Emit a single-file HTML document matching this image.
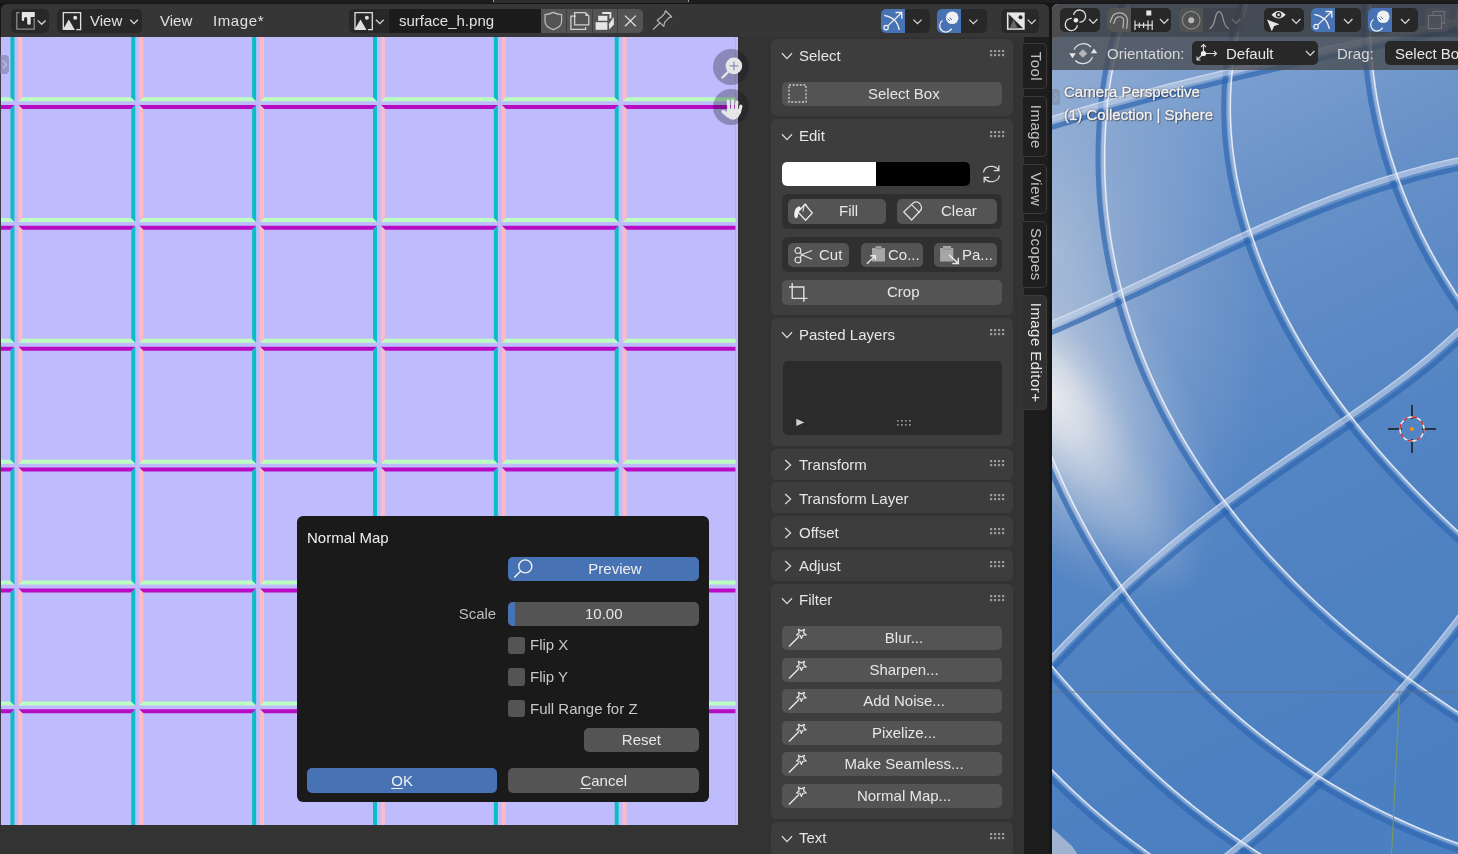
<!DOCTYPE html>
<html><head><meta charset="utf-8">
<style>
*{box-sizing:border-box;margin:0;padding:0}
*{-webkit-font-smoothing:antialiased}
html,body{width:1458px;height:854px;overflow:hidden;background:#161616;font-family:"Liberation Sans",sans-serif;font-size:15px;color:#e6e6e6}
.a{position:absolute}
.t{will-change:transform;position:absolute;white-space:nowrap;line-height:1;font-size:15px}
.pn{position:absolute;left:771px;width:242px;background:#3d3d3d;border-radius:6px}
.btn{position:absolute;background:#545454;border-radius:5px}
.dbtn{position:absolute;background:#282828;border-radius:5px}
</style></head><body>

<!-- LEFT AREA -->
<div class="a" style="left:0;top:0;width:1458px;height:3px;background:#1d1d1d"></div>
<div class="a" style="left:0.5px;top:4.4px;width:1048.5px;height:850px;background:#363636;border-radius:6px 6px 0 0"></div>
<!-- canvas surround bottom -->
<div class="a" style="left:0;top:825px;width:738px;height:29px;background:#333"></div>
<!-- canvas -->
<svg class="a" style="left:0px;top:37px" width="738" height="788" viewBox="0 37 738 788">
<rect x="0" y="37" width="738" height="788" fill="#bfbcfd"/>
<polygon points="-102.55,-15.85 14.45,-15.85 10.45,-11.85 -98.55,-11.85" fill="#b80bc4"/>
<polygon points="-102.55,101.15 14.45,101.15 10.45,97.15 -98.55,97.15" fill="#bbffc1"/>
<polygon points="-102.55,-15.85 -98.55,-11.85 -98.55,97.15 -102.55,101.15" fill="#ffbbc1"/>
<polygon points="14.45,-15.85 14.45,101.15 10.45,97.15 10.45,-11.85" fill="#0abdc6"/>
<polygon points="-102.55,105.00 14.45,105.00 10.45,109.00 -98.55,109.00" fill="#b80bc4"/>
<polygon points="-102.55,222.00 14.45,222.00 10.45,218.00 -98.55,218.00" fill="#bbffc1"/>
<polygon points="-102.55,105.00 -98.55,109.00 -98.55,218.00 -102.55,222.00" fill="#ffbbc1"/>
<polygon points="14.45,105.00 14.45,222.00 10.45,218.00 10.45,109.00" fill="#0abdc6"/>
<polygon points="-102.55,225.85 14.45,225.85 10.45,229.85 -98.55,229.85" fill="#b80bc4"/>
<polygon points="-102.55,342.85 14.45,342.85 10.45,338.85 -98.55,338.85" fill="#bbffc1"/>
<polygon points="-102.55,225.85 -98.55,229.85 -98.55,338.85 -102.55,342.85" fill="#ffbbc1"/>
<polygon points="14.45,225.85 14.45,342.85 10.45,338.85 10.45,229.85" fill="#0abdc6"/>
<polygon points="-102.55,346.70 14.45,346.70 10.45,350.70 -98.55,350.70" fill="#b80bc4"/>
<polygon points="-102.55,463.70 14.45,463.70 10.45,459.70 -98.55,459.70" fill="#bbffc1"/>
<polygon points="-102.55,346.70 -98.55,350.70 -98.55,459.70 -102.55,463.70" fill="#ffbbc1"/>
<polygon points="14.45,346.70 14.45,463.70 10.45,459.70 10.45,350.70" fill="#0abdc6"/>
<polygon points="-102.55,467.55 14.45,467.55 10.45,471.55 -98.55,471.55" fill="#b80bc4"/>
<polygon points="-102.55,584.55 14.45,584.55 10.45,580.55 -98.55,580.55" fill="#bbffc1"/>
<polygon points="-102.55,467.55 -98.55,471.55 -98.55,580.55 -102.55,584.55" fill="#ffbbc1"/>
<polygon points="14.45,467.55 14.45,584.55 10.45,580.55 10.45,471.55" fill="#0abdc6"/>
<polygon points="-102.55,588.40 14.45,588.40 10.45,592.40 -98.55,592.40" fill="#b80bc4"/>
<polygon points="-102.55,705.40 14.45,705.40 10.45,701.40 -98.55,701.40" fill="#bbffc1"/>
<polygon points="-102.55,588.40 -98.55,592.40 -98.55,701.40 -102.55,705.40" fill="#ffbbc1"/>
<polygon points="14.45,588.40 14.45,705.40 10.45,701.40 10.45,592.40" fill="#0abdc6"/>
<polygon points="-102.55,709.25 14.45,709.25 10.45,713.25 -98.55,713.25" fill="#b80bc4"/>
<polygon points="-102.55,709.25 -98.55,713.25 -98.55,826.25 -102.55,826.25" fill="#ffbbc1"/>
<polygon points="14.45,709.25 14.45,826.25 10.45,826.25 10.45,713.25" fill="#0abdc6"/>
<polygon points="18.30,-15.85 135.30,-15.85 131.30,-11.85 22.30,-11.85" fill="#b80bc4"/>
<polygon points="18.30,101.15 135.30,101.15 131.30,97.15 22.30,97.15" fill="#bbffc1"/>
<polygon points="18.30,-15.85 22.30,-11.85 22.30,97.15 18.30,101.15" fill="#ffbbc1"/>
<polygon points="135.30,-15.85 135.30,101.15 131.30,97.15 131.30,-11.85" fill="#0abdc6"/>
<polygon points="18.30,105.00 135.30,105.00 131.30,109.00 22.30,109.00" fill="#b80bc4"/>
<polygon points="18.30,222.00 135.30,222.00 131.30,218.00 22.30,218.00" fill="#bbffc1"/>
<polygon points="18.30,105.00 22.30,109.00 22.30,218.00 18.30,222.00" fill="#ffbbc1"/>
<polygon points="135.30,105.00 135.30,222.00 131.30,218.00 131.30,109.00" fill="#0abdc6"/>
<polygon points="18.30,225.85 135.30,225.85 131.30,229.85 22.30,229.85" fill="#b80bc4"/>
<polygon points="18.30,342.85 135.30,342.85 131.30,338.85 22.30,338.85" fill="#bbffc1"/>
<polygon points="18.30,225.85 22.30,229.85 22.30,338.85 18.30,342.85" fill="#ffbbc1"/>
<polygon points="135.30,225.85 135.30,342.85 131.30,338.85 131.30,229.85" fill="#0abdc6"/>
<polygon points="18.30,346.70 135.30,346.70 131.30,350.70 22.30,350.70" fill="#b80bc4"/>
<polygon points="18.30,463.70 135.30,463.70 131.30,459.70 22.30,459.70" fill="#bbffc1"/>
<polygon points="18.30,346.70 22.30,350.70 22.30,459.70 18.30,463.70" fill="#ffbbc1"/>
<polygon points="135.30,346.70 135.30,463.70 131.30,459.70 131.30,350.70" fill="#0abdc6"/>
<polygon points="18.30,467.55 135.30,467.55 131.30,471.55 22.30,471.55" fill="#b80bc4"/>
<polygon points="18.30,584.55 135.30,584.55 131.30,580.55 22.30,580.55" fill="#bbffc1"/>
<polygon points="18.30,467.55 22.30,471.55 22.30,580.55 18.30,584.55" fill="#ffbbc1"/>
<polygon points="135.30,467.55 135.30,584.55 131.30,580.55 131.30,471.55" fill="#0abdc6"/>
<polygon points="18.30,588.40 135.30,588.40 131.30,592.40 22.30,592.40" fill="#b80bc4"/>
<polygon points="18.30,705.40 135.30,705.40 131.30,701.40 22.30,701.40" fill="#bbffc1"/>
<polygon points="18.30,588.40 22.30,592.40 22.30,701.40 18.30,705.40" fill="#ffbbc1"/>
<polygon points="135.30,588.40 135.30,705.40 131.30,701.40 131.30,592.40" fill="#0abdc6"/>
<polygon points="18.30,709.25 135.30,709.25 131.30,713.25 22.30,713.25" fill="#b80bc4"/>
<polygon points="18.30,709.25 22.30,713.25 22.30,826.25 18.30,826.25" fill="#ffbbc1"/>
<polygon points="135.30,709.25 135.30,826.25 131.30,826.25 131.30,713.25" fill="#0abdc6"/>
<polygon points="139.15,-15.85 256.15,-15.85 252.15,-11.85 143.15,-11.85" fill="#b80bc4"/>
<polygon points="139.15,101.15 256.15,101.15 252.15,97.15 143.15,97.15" fill="#bbffc1"/>
<polygon points="139.15,-15.85 143.15,-11.85 143.15,97.15 139.15,101.15" fill="#ffbbc1"/>
<polygon points="256.15,-15.85 256.15,101.15 252.15,97.15 252.15,-11.85" fill="#0abdc6"/>
<polygon points="139.15,105.00 256.15,105.00 252.15,109.00 143.15,109.00" fill="#b80bc4"/>
<polygon points="139.15,222.00 256.15,222.00 252.15,218.00 143.15,218.00" fill="#bbffc1"/>
<polygon points="139.15,105.00 143.15,109.00 143.15,218.00 139.15,222.00" fill="#ffbbc1"/>
<polygon points="256.15,105.00 256.15,222.00 252.15,218.00 252.15,109.00" fill="#0abdc6"/>
<polygon points="139.15,225.85 256.15,225.85 252.15,229.85 143.15,229.85" fill="#b80bc4"/>
<polygon points="139.15,342.85 256.15,342.85 252.15,338.85 143.15,338.85" fill="#bbffc1"/>
<polygon points="139.15,225.85 143.15,229.85 143.15,338.85 139.15,342.85" fill="#ffbbc1"/>
<polygon points="256.15,225.85 256.15,342.85 252.15,338.85 252.15,229.85" fill="#0abdc6"/>
<polygon points="139.15,346.70 256.15,346.70 252.15,350.70 143.15,350.70" fill="#b80bc4"/>
<polygon points="139.15,463.70 256.15,463.70 252.15,459.70 143.15,459.70" fill="#bbffc1"/>
<polygon points="139.15,346.70 143.15,350.70 143.15,459.70 139.15,463.70" fill="#ffbbc1"/>
<polygon points="256.15,346.70 256.15,463.70 252.15,459.70 252.15,350.70" fill="#0abdc6"/>
<polygon points="139.15,467.55 256.15,467.55 252.15,471.55 143.15,471.55" fill="#b80bc4"/>
<polygon points="139.15,584.55 256.15,584.55 252.15,580.55 143.15,580.55" fill="#bbffc1"/>
<polygon points="139.15,467.55 143.15,471.55 143.15,580.55 139.15,584.55" fill="#ffbbc1"/>
<polygon points="256.15,467.55 256.15,584.55 252.15,580.55 252.15,471.55" fill="#0abdc6"/>
<polygon points="139.15,588.40 256.15,588.40 252.15,592.40 143.15,592.40" fill="#b80bc4"/>
<polygon points="139.15,705.40 256.15,705.40 252.15,701.40 143.15,701.40" fill="#bbffc1"/>
<polygon points="139.15,588.40 143.15,592.40 143.15,701.40 139.15,705.40" fill="#ffbbc1"/>
<polygon points="256.15,588.40 256.15,705.40 252.15,701.40 252.15,592.40" fill="#0abdc6"/>
<polygon points="139.15,709.25 256.15,709.25 252.15,713.25 143.15,713.25" fill="#b80bc4"/>
<polygon points="139.15,709.25 143.15,713.25 143.15,826.25 139.15,826.25" fill="#ffbbc1"/>
<polygon points="256.15,709.25 256.15,826.25 252.15,826.25 252.15,713.25" fill="#0abdc6"/>
<polygon points="260.00,-15.85 377.00,-15.85 373.00,-11.85 264.00,-11.85" fill="#b80bc4"/>
<polygon points="260.00,101.15 377.00,101.15 373.00,97.15 264.00,97.15" fill="#bbffc1"/>
<polygon points="260.00,-15.85 264.00,-11.85 264.00,97.15 260.00,101.15" fill="#ffbbc1"/>
<polygon points="377.00,-15.85 377.00,101.15 373.00,97.15 373.00,-11.85" fill="#0abdc6"/>
<polygon points="260.00,105.00 377.00,105.00 373.00,109.00 264.00,109.00" fill="#b80bc4"/>
<polygon points="260.00,222.00 377.00,222.00 373.00,218.00 264.00,218.00" fill="#bbffc1"/>
<polygon points="260.00,105.00 264.00,109.00 264.00,218.00 260.00,222.00" fill="#ffbbc1"/>
<polygon points="377.00,105.00 377.00,222.00 373.00,218.00 373.00,109.00" fill="#0abdc6"/>
<polygon points="260.00,225.85 377.00,225.85 373.00,229.85 264.00,229.85" fill="#b80bc4"/>
<polygon points="260.00,342.85 377.00,342.85 373.00,338.85 264.00,338.85" fill="#bbffc1"/>
<polygon points="260.00,225.85 264.00,229.85 264.00,338.85 260.00,342.85" fill="#ffbbc1"/>
<polygon points="377.00,225.85 377.00,342.85 373.00,338.85 373.00,229.85" fill="#0abdc6"/>
<polygon points="260.00,346.70 377.00,346.70 373.00,350.70 264.00,350.70" fill="#b80bc4"/>
<polygon points="260.00,463.70 377.00,463.70 373.00,459.70 264.00,459.70" fill="#bbffc1"/>
<polygon points="260.00,346.70 264.00,350.70 264.00,459.70 260.00,463.70" fill="#ffbbc1"/>
<polygon points="377.00,346.70 377.00,463.70 373.00,459.70 373.00,350.70" fill="#0abdc6"/>
<polygon points="260.00,467.55 377.00,467.55 373.00,471.55 264.00,471.55" fill="#b80bc4"/>
<polygon points="260.00,584.55 377.00,584.55 373.00,580.55 264.00,580.55" fill="#bbffc1"/>
<polygon points="260.00,467.55 264.00,471.55 264.00,580.55 260.00,584.55" fill="#ffbbc1"/>
<polygon points="377.00,467.55 377.00,584.55 373.00,580.55 373.00,471.55" fill="#0abdc6"/>
<polygon points="260.00,588.40 377.00,588.40 373.00,592.40 264.00,592.40" fill="#b80bc4"/>
<polygon points="260.00,705.40 377.00,705.40 373.00,701.40 264.00,701.40" fill="#bbffc1"/>
<polygon points="260.00,588.40 264.00,592.40 264.00,701.40 260.00,705.40" fill="#ffbbc1"/>
<polygon points="377.00,588.40 377.00,705.40 373.00,701.40 373.00,592.40" fill="#0abdc6"/>
<polygon points="260.00,709.25 377.00,709.25 373.00,713.25 264.00,713.25" fill="#b80bc4"/>
<polygon points="260.00,709.25 264.00,713.25 264.00,826.25 260.00,826.25" fill="#ffbbc1"/>
<polygon points="377.00,709.25 377.00,826.25 373.00,826.25 373.00,713.25" fill="#0abdc6"/>
<polygon points="380.85,-15.85 497.85,-15.85 493.85,-11.85 384.85,-11.85" fill="#b80bc4"/>
<polygon points="380.85,101.15 497.85,101.15 493.85,97.15 384.85,97.15" fill="#bbffc1"/>
<polygon points="380.85,-15.85 384.85,-11.85 384.85,97.15 380.85,101.15" fill="#ffbbc1"/>
<polygon points="497.85,-15.85 497.85,101.15 493.85,97.15 493.85,-11.85" fill="#0abdc6"/>
<polygon points="380.85,105.00 497.85,105.00 493.85,109.00 384.85,109.00" fill="#b80bc4"/>
<polygon points="380.85,222.00 497.85,222.00 493.85,218.00 384.85,218.00" fill="#bbffc1"/>
<polygon points="380.85,105.00 384.85,109.00 384.85,218.00 380.85,222.00" fill="#ffbbc1"/>
<polygon points="497.85,105.00 497.85,222.00 493.85,218.00 493.85,109.00" fill="#0abdc6"/>
<polygon points="380.85,225.85 497.85,225.85 493.85,229.85 384.85,229.85" fill="#b80bc4"/>
<polygon points="380.85,342.85 497.85,342.85 493.85,338.85 384.85,338.85" fill="#bbffc1"/>
<polygon points="380.85,225.85 384.85,229.85 384.85,338.85 380.85,342.85" fill="#ffbbc1"/>
<polygon points="497.85,225.85 497.85,342.85 493.85,338.85 493.85,229.85" fill="#0abdc6"/>
<polygon points="380.85,346.70 497.85,346.70 493.85,350.70 384.85,350.70" fill="#b80bc4"/>
<polygon points="380.85,463.70 497.85,463.70 493.85,459.70 384.85,459.70" fill="#bbffc1"/>
<polygon points="380.85,346.70 384.85,350.70 384.85,459.70 380.85,463.70" fill="#ffbbc1"/>
<polygon points="497.85,346.70 497.85,463.70 493.85,459.70 493.85,350.70" fill="#0abdc6"/>
<polygon points="380.85,467.55 497.85,467.55 493.85,471.55 384.85,471.55" fill="#b80bc4"/>
<polygon points="380.85,584.55 497.85,584.55 493.85,580.55 384.85,580.55" fill="#bbffc1"/>
<polygon points="380.85,467.55 384.85,471.55 384.85,580.55 380.85,584.55" fill="#ffbbc1"/>
<polygon points="497.85,467.55 497.85,584.55 493.85,580.55 493.85,471.55" fill="#0abdc6"/>
<polygon points="380.85,588.40 497.85,588.40 493.85,592.40 384.85,592.40" fill="#b80bc4"/>
<polygon points="380.85,705.40 497.85,705.40 493.85,701.40 384.85,701.40" fill="#bbffc1"/>
<polygon points="380.85,588.40 384.85,592.40 384.85,701.40 380.85,705.40" fill="#ffbbc1"/>
<polygon points="497.85,588.40 497.85,705.40 493.85,701.40 493.85,592.40" fill="#0abdc6"/>
<polygon points="380.85,709.25 497.85,709.25 493.85,713.25 384.85,713.25" fill="#b80bc4"/>
<polygon points="380.85,709.25 384.85,713.25 384.85,826.25 380.85,826.25" fill="#ffbbc1"/>
<polygon points="497.85,709.25 497.85,826.25 493.85,826.25 493.85,713.25" fill="#0abdc6"/>
<polygon points="501.70,-15.85 618.70,-15.85 614.70,-11.85 505.70,-11.85" fill="#b80bc4"/>
<polygon points="501.70,101.15 618.70,101.15 614.70,97.15 505.70,97.15" fill="#bbffc1"/>
<polygon points="501.70,-15.85 505.70,-11.85 505.70,97.15 501.70,101.15" fill="#ffbbc1"/>
<polygon points="618.70,-15.85 618.70,101.15 614.70,97.15 614.70,-11.85" fill="#0abdc6"/>
<polygon points="501.70,105.00 618.70,105.00 614.70,109.00 505.70,109.00" fill="#b80bc4"/>
<polygon points="501.70,222.00 618.70,222.00 614.70,218.00 505.70,218.00" fill="#bbffc1"/>
<polygon points="501.70,105.00 505.70,109.00 505.70,218.00 501.70,222.00" fill="#ffbbc1"/>
<polygon points="618.70,105.00 618.70,222.00 614.70,218.00 614.70,109.00" fill="#0abdc6"/>
<polygon points="501.70,225.85 618.70,225.85 614.70,229.85 505.70,229.85" fill="#b80bc4"/>
<polygon points="501.70,342.85 618.70,342.85 614.70,338.85 505.70,338.85" fill="#bbffc1"/>
<polygon points="501.70,225.85 505.70,229.85 505.70,338.85 501.70,342.85" fill="#ffbbc1"/>
<polygon points="618.70,225.85 618.70,342.85 614.70,338.85 614.70,229.85" fill="#0abdc6"/>
<polygon points="501.70,346.70 618.70,346.70 614.70,350.70 505.70,350.70" fill="#b80bc4"/>
<polygon points="501.70,463.70 618.70,463.70 614.70,459.70 505.70,459.70" fill="#bbffc1"/>
<polygon points="501.70,346.70 505.70,350.70 505.70,459.70 501.70,463.70" fill="#ffbbc1"/>
<polygon points="618.70,346.70 618.70,463.70 614.70,459.70 614.70,350.70" fill="#0abdc6"/>
<polygon points="501.70,467.55 618.70,467.55 614.70,471.55 505.70,471.55" fill="#b80bc4"/>
<polygon points="501.70,584.55 618.70,584.55 614.70,580.55 505.70,580.55" fill="#bbffc1"/>
<polygon points="501.70,467.55 505.70,471.55 505.70,580.55 501.70,584.55" fill="#ffbbc1"/>
<polygon points="618.70,467.55 618.70,584.55 614.70,580.55 614.70,471.55" fill="#0abdc6"/>
<polygon points="501.70,588.40 618.70,588.40 614.70,592.40 505.70,592.40" fill="#b80bc4"/>
<polygon points="501.70,705.40 618.70,705.40 614.70,701.40 505.70,701.40" fill="#bbffc1"/>
<polygon points="501.70,588.40 505.70,592.40 505.70,701.40 501.70,705.40" fill="#ffbbc1"/>
<polygon points="618.70,588.40 618.70,705.40 614.70,701.40 614.70,592.40" fill="#0abdc6"/>
<polygon points="501.70,709.25 618.70,709.25 614.70,713.25 505.70,713.25" fill="#b80bc4"/>
<polygon points="501.70,709.25 505.70,713.25 505.70,826.25 501.70,826.25" fill="#ffbbc1"/>
<polygon points="618.70,709.25 618.70,826.25 614.70,826.25 614.70,713.25" fill="#0abdc6"/>
<polygon points="622.55,-15.85 739.55,-15.85 735.55,-11.85 626.55,-11.85" fill="#b80bc4"/>
<polygon points="622.55,101.15 739.55,101.15 735.55,97.15 626.55,97.15" fill="#bbffc1"/>
<polygon points="622.55,-15.85 626.55,-11.85 626.55,97.15 622.55,101.15" fill="#ffbbc1"/>
<polygon points="739.55,-15.85 739.55,101.15 735.55,97.15 735.55,-11.85" fill="#0abdc6"/>
<polygon points="622.55,105.00 739.55,105.00 735.55,109.00 626.55,109.00" fill="#b80bc4"/>
<polygon points="622.55,222.00 739.55,222.00 735.55,218.00 626.55,218.00" fill="#bbffc1"/>
<polygon points="622.55,105.00 626.55,109.00 626.55,218.00 622.55,222.00" fill="#ffbbc1"/>
<polygon points="739.55,105.00 739.55,222.00 735.55,218.00 735.55,109.00" fill="#0abdc6"/>
<polygon points="622.55,225.85 739.55,225.85 735.55,229.85 626.55,229.85" fill="#b80bc4"/>
<polygon points="622.55,342.85 739.55,342.85 735.55,338.85 626.55,338.85" fill="#bbffc1"/>
<polygon points="622.55,225.85 626.55,229.85 626.55,338.85 622.55,342.85" fill="#ffbbc1"/>
<polygon points="739.55,225.85 739.55,342.85 735.55,338.85 735.55,229.85" fill="#0abdc6"/>
<polygon points="622.55,346.70 739.55,346.70 735.55,350.70 626.55,350.70" fill="#b80bc4"/>
<polygon points="622.55,463.70 739.55,463.70 735.55,459.70 626.55,459.70" fill="#bbffc1"/>
<polygon points="622.55,346.70 626.55,350.70 626.55,459.70 622.55,463.70" fill="#ffbbc1"/>
<polygon points="739.55,346.70 739.55,463.70 735.55,459.70 735.55,350.70" fill="#0abdc6"/>
<polygon points="622.55,467.55 739.55,467.55 735.55,471.55 626.55,471.55" fill="#b80bc4"/>
<polygon points="622.55,584.55 739.55,584.55 735.55,580.55 626.55,580.55" fill="#bbffc1"/>
<polygon points="622.55,467.55 626.55,471.55 626.55,580.55 622.55,584.55" fill="#ffbbc1"/>
<polygon points="739.55,467.55 739.55,584.55 735.55,580.55 735.55,471.55" fill="#0abdc6"/>
<polygon points="622.55,588.40 739.55,588.40 735.55,592.40 626.55,592.40" fill="#b80bc4"/>
<polygon points="622.55,705.40 739.55,705.40 735.55,701.40 626.55,701.40" fill="#bbffc1"/>
<polygon points="622.55,588.40 626.55,592.40 626.55,701.40 622.55,705.40" fill="#ffbbc1"/>
<polygon points="739.55,588.40 739.55,705.40 735.55,701.40 735.55,592.40" fill="#0abdc6"/>
<polygon points="622.55,709.25 739.55,709.25 735.55,713.25 626.55,713.25" fill="#b80bc4"/>
<polygon points="622.55,709.25 626.55,713.25 626.55,826.25 622.55,826.25" fill="#ffbbc1"/>
<polygon points="739.55,709.25 739.55,826.25 735.55,826.25 735.55,713.25" fill="#0abdc6"/>
<rect x="735.5" y="37" width="2.5" height="788" fill="#bfbcfd"/>
<rect x="0" y="37" width="1" height="788" fill="#3c3c4a"/>
</svg>
<!-- N panel region -->
<div class="a" style="left:738px;top:37px;width:286px;height:817px;background:#333"></div>
<!-- tab strip -->
<div class="a" style="left:1024px;top:37px;width:25px;height:817px;background:#1d1d1d"></div>



<!-- POPUP -->
<div class="a" style="left:297px;top:516px;width:412px;height:286.3px;background:#1a1a1a;border-radius:6px"></div>
<div class="t" style="left:307px;top:529.5px;color:#f0f0f0">Normal Map</div>
<div class="btn" style="left:507.8px;top:556.7px;width:191.5px;height:24.6px;background:#4772b3"></div>
<svg class="a" style="left:512px;top:558px" width="24" height="22" viewBox="0 0 24 22"><circle cx="13.3" cy="8.4" r="6.5" fill="none" stroke="#f0f0f0" stroke-width="1.4"/><path d="M8.7 13L2.3 19.6" stroke="#f0f0f0" stroke-width="1.5"/></svg>
<div class="t" style="left:507.8px;top:556.7px;width:214px;height:24.6px;line-height:24.6px;text-align:center;color:#f0f0f0">Preview</div>
<div class="t" style="left:300px;top:602px;width:196.2px;height:23.9px;line-height:23.9px;text-align:right;color:#bdbdbd">Scale</div>
<div class="btn" style="left:507.8px;top:602px;width:191.5px;height:23.9px;background:#545454;overflow:hidden"><div class="a" style="left:0;top:0;width:7px;height:24px;background:#4772b3"></div></div>
<div class="t" style="left:507.8px;top:602px;width:191.5px;height:23.9px;line-height:23.9px;text-align:center;color:#e6e6e6">10.00</div>
<div class="btn" style="left:507.8px;top:637.2px;width:17.6px;height:16.8px;background:#545454;border-radius:3px"></div>
<div class="t" style="left:530px;top:637.2px;height:16.8px;line-height:16.8px;color:#c8c8c8">Flip X</div>
<div class="btn" style="left:507.8px;top:668.1px;width:17.6px;height:17.6px;background:#545454;border-radius:3px"></div>
<div class="t" style="left:530px;top:668.1px;height:17.6px;line-height:17.6px;color:#c8c8c8">Flip Y</div>
<div class="btn" style="left:507.8px;top:699.7px;width:17.6px;height:17.6px;background:#545454;border-radius:3px"></div>
<div class="t" style="left:530px;top:699.7px;height:17.6px;line-height:17.6px;color:#c8c8c8">Full Range for Z</div>
<div class="btn" style="left:584.4px;top:727.8px;width:114.9px;height:24.6px;background:#545454"></div>
<div class="t" style="left:584.4px;top:727.8px;width:114.9px;height:24.6px;line-height:24.6px;text-align:center;color:#e6e6e6">Reset</div>
<div class="btn" style="left:306.5px;top:768.2px;width:190.1px;height:24.6px;background:#4772b3"></div>
<div class="t" style="left:306.5px;top:769px;width:190.1px;height:24.6px;line-height:24.6px;text-align:center;color:#f0f0f0"><u style="text-decoration-thickness:1px;text-underline-offset:1.5px">O</u>K</div>
<div class="btn" style="left:507.8px;top:768.2px;width:191.5px;height:24.6px;background:#545454"></div>
<div class="t" style="left:507.8px;top:769px;width:191.5px;height:24.6px;line-height:24.6px;text-align:center;color:#e6e6e6"><u style="text-decoration-thickness:1px;text-underline-offset:1.5px">C</u>ancel</div>

<div class="a" style="left:493px;top:0;width:196px;height:2.5px;background:#2e2e2e"></div><div class="a" style="left:493px;top:0;width:1.2px;height:2.2px;background:#9a9a9a"></div><div class="a" style="left:688px;top:0;width:1.2px;height:2.2px;background:#9a9a9a"></div>
<!-- NPANEL -->
<div class="pn" style="top:39px;height:77px"></div><div class="t" style="left:799px;top:47.5px;color:#e6e6e6">Select</div><svg class="a" style="left:780.6px;top:52.2px" width="13" height="9" viewBox="0 0 13 9"><polyline points="1,1.2 6,6.6 11,1.2" fill="none" stroke="#d8d8d8" stroke-width="1.3"/></svg><svg class="a" style="left:990px;top:50.3px" width="15" height="7" viewBox="0 0 15 7"><rect x="0" y="0" width="2.2" height="2.2" fill="#9a9a9a"/><rect x="0" y="4" width="2.2" height="2.2" fill="#9a9a9a"/><rect x="4" y="0" width="2.2" height="2.2" fill="#9a9a9a"/><rect x="4" y="4" width="2.2" height="2.2" fill="#9a9a9a"/><rect x="8" y="0" width="2.2" height="2.2" fill="#9a9a9a"/><rect x="8" y="4" width="2.2" height="2.2" fill="#9a9a9a"/><rect x="12" y="0" width="2.2" height="2.2" fill="#9a9a9a"/><rect x="12" y="4" width="2.2" height="2.2" fill="#9a9a9a"/></svg><div class="btn" style="left:782.2px;top:81.6px;width:219.7px;height:24px;background:#545454;border-radius:5px"></div><div class="t" style="left:868.2px;top:81.6px;height:24px;line-height:24px;color:#e6e6e6">Select Box</div><svg class="a" style="left:788px;top:84px" width="20" height="19" viewBox="0 0 20 19"><rect x="1" y="1" width="17" height="17" fill="none" stroke="#d0d0d0" stroke-width="1.3" stroke-dasharray="2,1.6"/></svg><div class="pn" style="top:119.3px;height:196px"></div><div class="t" style="left:799px;top:127.8px;color:#e6e6e6">Edit</div><svg class="a" style="left:780.6px;top:132.5px" width="13" height="9" viewBox="0 0 13 9"><polyline points="1,1.2 6,6.6 11,1.2" fill="none" stroke="#d8d8d8" stroke-width="1.3"/></svg><svg class="a" style="left:990px;top:130.6px" width="15" height="7" viewBox="0 0 15 7"><rect x="0" y="0" width="2.2" height="2.2" fill="#9a9a9a"/><rect x="0" y="4" width="2.2" height="2.2" fill="#9a9a9a"/><rect x="4" y="0" width="2.2" height="2.2" fill="#9a9a9a"/><rect x="4" y="4" width="2.2" height="2.2" fill="#9a9a9a"/><rect x="8" y="0" width="2.2" height="2.2" fill="#9a9a9a"/><rect x="8" y="4" width="2.2" height="2.2" fill="#9a9a9a"/><rect x="12" y="0" width="2.2" height="2.2" fill="#9a9a9a"/><rect x="12" y="4" width="2.2" height="2.2" fill="#9a9a9a"/></svg><div class="a" style="left:782px;top:162px;width:187.5px;height:23.7px;background:#000;border-radius:5px"></div><div class="a" style="left:782px;top:162px;width:93.6px;height:23.7px;background:#fff;border-radius:5px 0 0 5px"></div><svg class="a" style="left:981px;top:164px" width="21" height="20" viewBox="0 0 21 20"><path d="M2.5 8.5A8 7.2 0 0 1 17.6 6.4M18.5 11.5A8 7.2 0 0 1 3.4 13.6" fill="none" stroke="#d8d8d8" stroke-width="1.3"/><polyline points="17.8,1.5 17.8,6.6 12.8,6.6" fill="none" stroke="#d8d8d8" stroke-width="1.3"/><polyline points="3.2,18.5 3.2,13.4 8.2,13.4" fill="none" stroke="#d8d8d8" stroke-width="1.3"/></svg><div class="a" style="left:782px;top:193.6px;width:220.3px;height:35.7px;background:#2f2f2f;border-radius:6px"></div><div class="btn" style="left:787.8px;top:199px;width:98.4px;height:24.6px;background:#545454;border-radius:5px"></div><div class="t" style="left:838.7px;top:199px;height:24.6px;line-height:24.6px;color:#e6e6e6">Fill</div><div class="btn" style="left:897.2px;top:199px;width:99.4px;height:24.6px;background:#545454;border-radius:5px"></div><div class="t" style="left:940.8px;top:199px;height:24.6px;line-height:24.6px;color:#e6e6e6">Clear</div><div class="a" style="left:782px;top:237.2px;width:220.3px;height:35.1px;background:#2f2f2f;border-radius:6px"></div><div class="btn" style="left:787.8px;top:242.8px;width:61.2px;height:24.1px;background:#545454;border-radius:5px"></div><div class="t" style="left:818.5px;top:242.8px;height:24.1px;line-height:24.1px;color:#e6e6e6">Cut</div><div class="btn" style="left:860.8px;top:242.8px;width:62px;height:24.1px;background:#545454;border-radius:5px"></div><div class="t" style="left:888.4px;top:242.8px;height:24.1px;line-height:24.1px;color:#e6e6e6">Co...</div><div class="btn" style="left:934.1px;top:242.8px;width:62.5px;height:24.1px;background:#545454;border-radius:5px"></div><div class="t" style="left:962.2px;top:242.8px;height:24.1px;line-height:24.1px;color:#e6e6e6">Pa...</div><div class="btn" style="left:782.1px;top:280.4px;width:220.2px;height:24.4px;background:#545454;border-radius:5px"></div><div class="t" style="left:887.4px;top:280.4px;height:24.4px;line-height:24.4px;color:#e6e6e6">Crop</div><svg class="a" style="left:793px;top:201px" width="22" height="21" viewBox="0 0 22 21"><path d="M12 3.3L19.3 12L12.6 19.2L4.9 11Z" fill="none" stroke="#e6e6e6" stroke-width="1.3" stroke-linejoin="round"/><path d="M10 10.5Q11.5 -1 14 5.5" fill="none" stroke="#e6e6e6" stroke-width="1.1"/><path d="M6.5 5.2Q1.2 6.5 1.2 13.5Q1.4 17.6 3.6 17.2Q5.2 16.6 5.1 13.6Q5.2 9.8 8.2 7.6Z" fill="#f0f0f0"/></svg><svg class="a" style="left:902px;top:201px" width="22" height="21" viewBox="0 0 22 21"><path d="M1.8 11L11.2 1.9Q13.5 0 16.5 1.5Q19.5 3.5 19.6 6.5Q19.6 8.5 18 10L9.6 19Z" fill="none" stroke="#e0e0e0" stroke-width="1.3" stroke-linejoin="round"/><path d="M9.5 3.6L17.6 11.6" stroke="#e0e0e0" stroke-width="1.2"/></svg><svg class="a" style="left:793px;top:245px" width="22" height="20" viewBox="0 0 22 20"><circle cx="4.9" cy="5.6" r="2.9" fill="none" stroke="#e0e0e0" stroke-width="1.2"/><circle cx="4.9" cy="14.9" r="2.9" fill="none" stroke="#e0e0e0" stroke-width="1.2"/><path d="M7.4 7.2L8.5 9.7L19 5.5M7.4 13.3L8.5 9.7L19 14.3" fill="none" stroke="#e0e0e0" stroke-width="1.2"/></svg><svg class="a" style="left:866px;top:244px" width="24" height="22" viewBox="0 0 24 22"><path d="M6 4H9.5V2.2H15.5V4H19V17.4H6Z" fill="#a6a6a6"/><path d="M9.5 4.6H15.5" stroke="#8a8a8a" stroke-width="1"/><path d="M0.9 19.7L9.4 11.7M4.3 11.7H9.4V16.2" fill="none" stroke="#e6e6e6" stroke-width="1.4"/></svg><svg class="a" style="left:939px;top:244px" width="24" height="22" viewBox="0 0 24 22"><path d="M1.1 4.1H4V1.9H12V4.1H14.3V17.5H1.1Z" fill="#a6a6a6"/><path d="M4 5.2H12" stroke="#8a8a8a" stroke-width="1"/><path d="M10 10.8L19.3 19.4M13.3 19.4H19.3V13.7" fill="none" stroke="#e6e6e6" stroke-width="1.5"/></svg><svg class="a" style="left:788px;top:282px" width="20" height="21" viewBox="0 0 20 21"><path d="M4.2 1V16.4H19.5M1 5H15.8V19.8" fill="none" stroke="#e0e0e0" stroke-width="1.4"/></svg><div class="pn" style="top:318px;height:128px"></div><div class="t" style="left:799px;top:326.5px;color:#e6e6e6">Pasted Layers</div><svg class="a" style="left:780.6px;top:331.2px" width="13" height="9" viewBox="0 0 13 9"><polyline points="1,1.2 6,6.6 11,1.2" fill="none" stroke="#d8d8d8" stroke-width="1.3"/></svg><svg class="a" style="left:990px;top:329.3px" width="15" height="7" viewBox="0 0 15 7"><rect x="0" y="0" width="2.2" height="2.2" fill="#9a9a9a"/><rect x="0" y="4" width="2.2" height="2.2" fill="#9a9a9a"/><rect x="4" y="0" width="2.2" height="2.2" fill="#9a9a9a"/><rect x="4" y="4" width="2.2" height="2.2" fill="#9a9a9a"/><rect x="8" y="0" width="2.2" height="2.2" fill="#9a9a9a"/><rect x="8" y="4" width="2.2" height="2.2" fill="#9a9a9a"/><rect x="12" y="0" width="2.2" height="2.2" fill="#9a9a9a"/><rect x="12" y="4" width="2.2" height="2.2" fill="#9a9a9a"/></svg><div class="a" style="left:782.5px;top:361px;width:219.6px;height:73.5px;background:#2b2b2b;border-radius:5px"></div><svg class="a" style="left:795px;top:418px" width="11" height="9" viewBox="0 0 11 9"><polygon points="1.3,0.8 9.3,4.4 1.3,8" fill="#cfcfcf"/></svg><svg class="a" style="left:897px;top:420px" width="15" height="7" viewBox="0 0 15 7"><rect x="0" y="0" width="1.6" height="1.6" fill="#a0a0a0"/><rect x="0" y="4" width="1.6" height="1.6" fill="#a0a0a0"/><rect x="4" y="0" width="1.6" height="1.6" fill="#a0a0a0"/><rect x="4" y="4" width="1.6" height="1.6" fill="#a0a0a0"/><rect x="8" y="0" width="1.6" height="1.6" fill="#a0a0a0"/><rect x="8" y="4" width="1.6" height="1.6" fill="#a0a0a0"/><rect x="12" y="0" width="1.6" height="1.6" fill="#a0a0a0"/><rect x="12" y="4" width="1.6" height="1.6" fill="#a0a0a0"/></svg><div class="pn" style="top:448.7px;height:31.2px"></div><div class="t" style="left:799px;top:457.2px;color:#e6e6e6">Transform</div><svg class="a" style="left:783.8px;top:459.2px" width="9" height="13" viewBox="0 0 9 13"><polyline points="1.2,1 6.6,6 1.2,11" fill="none" stroke="#d8d8d8" stroke-width="1.3"/></svg><svg class="a" style="left:990px;top:460.0px" width="15" height="7" viewBox="0 0 15 7"><rect x="0" y="0" width="2.2" height="2.2" fill="#9a9a9a"/><rect x="0" y="4" width="2.2" height="2.2" fill="#9a9a9a"/><rect x="4" y="0" width="2.2" height="2.2" fill="#9a9a9a"/><rect x="4" y="4" width="2.2" height="2.2" fill="#9a9a9a"/><rect x="8" y="0" width="2.2" height="2.2" fill="#9a9a9a"/><rect x="8" y="4" width="2.2" height="2.2" fill="#9a9a9a"/><rect x="12" y="0" width="2.2" height="2.2" fill="#9a9a9a"/><rect x="12" y="4" width="2.2" height="2.2" fill="#9a9a9a"/></svg><div class="pn" style="top:482.4px;height:30.9px"></div><div class="t" style="left:799px;top:490.9px;color:#e6e6e6">Transform Layer</div><svg class="a" style="left:783.8px;top:492.9px" width="9" height="13" viewBox="0 0 9 13"><polyline points="1.2,1 6.6,6 1.2,11" fill="none" stroke="#d8d8d8" stroke-width="1.3"/></svg><svg class="a" style="left:990px;top:493.7px" width="15" height="7" viewBox="0 0 15 7"><rect x="0" y="0" width="2.2" height="2.2" fill="#9a9a9a"/><rect x="0" y="4" width="2.2" height="2.2" fill="#9a9a9a"/><rect x="4" y="0" width="2.2" height="2.2" fill="#9a9a9a"/><rect x="4" y="4" width="2.2" height="2.2" fill="#9a9a9a"/><rect x="8" y="0" width="2.2" height="2.2" fill="#9a9a9a"/><rect x="8" y="4" width="2.2" height="2.2" fill="#9a9a9a"/><rect x="12" y="0" width="2.2" height="2.2" fill="#9a9a9a"/><rect x="12" y="4" width="2.2" height="2.2" fill="#9a9a9a"/></svg><div class="pn" style="top:516.2px;height:31.2px"></div><div class="t" style="left:799px;top:524.7px;color:#e6e6e6">Offset</div><svg class="a" style="left:783.8px;top:526.7px" width="9" height="13" viewBox="0 0 9 13"><polyline points="1.2,1 6.6,6 1.2,11" fill="none" stroke="#d8d8d8" stroke-width="1.3"/></svg><svg class="a" style="left:990px;top:527.5px" width="15" height="7" viewBox="0 0 15 7"><rect x="0" y="0" width="2.2" height="2.2" fill="#9a9a9a"/><rect x="0" y="4" width="2.2" height="2.2" fill="#9a9a9a"/><rect x="4" y="0" width="2.2" height="2.2" fill="#9a9a9a"/><rect x="4" y="4" width="2.2" height="2.2" fill="#9a9a9a"/><rect x="8" y="0" width="2.2" height="2.2" fill="#9a9a9a"/><rect x="8" y="4" width="2.2" height="2.2" fill="#9a9a9a"/><rect x="12" y="0" width="2.2" height="2.2" fill="#9a9a9a"/><rect x="12" y="4" width="2.2" height="2.2" fill="#9a9a9a"/></svg><div class="pn" style="top:549.9px;height:31.2px"></div><div class="t" style="left:799px;top:558.4px;color:#e6e6e6">Adjust</div><svg class="a" style="left:783.8px;top:560.4px" width="9" height="13" viewBox="0 0 9 13"><polyline points="1.2,1 6.6,6 1.2,11" fill="none" stroke="#d8d8d8" stroke-width="1.3"/></svg><svg class="a" style="left:990px;top:561.1999999999999px" width="15" height="7" viewBox="0 0 15 7"><rect x="0" y="0" width="2.2" height="2.2" fill="#9a9a9a"/><rect x="0" y="4" width="2.2" height="2.2" fill="#9a9a9a"/><rect x="4" y="0" width="2.2" height="2.2" fill="#9a9a9a"/><rect x="4" y="4" width="2.2" height="2.2" fill="#9a9a9a"/><rect x="8" y="0" width="2.2" height="2.2" fill="#9a9a9a"/><rect x="8" y="4" width="2.2" height="2.2" fill="#9a9a9a"/><rect x="12" y="0" width="2.2" height="2.2" fill="#9a9a9a"/><rect x="12" y="4" width="2.2" height="2.2" fill="#9a9a9a"/></svg><div class="pn" style="top:583.7px;height:235px"></div><div class="t" style="left:799px;top:592.2px;color:#e6e6e6">Filter</div><svg class="a" style="left:780.6px;top:596.9000000000001px" width="13" height="9" viewBox="0 0 13 9"><polyline points="1,1.2 6,6.6 11,1.2" fill="none" stroke="#d8d8d8" stroke-width="1.3"/></svg><svg class="a" style="left:990px;top:595.0px" width="15" height="7" viewBox="0 0 15 7"><rect x="0" y="0" width="2.2" height="2.2" fill="#9a9a9a"/><rect x="0" y="4" width="2.2" height="2.2" fill="#9a9a9a"/><rect x="4" y="0" width="2.2" height="2.2" fill="#9a9a9a"/><rect x="4" y="4" width="2.2" height="2.2" fill="#9a9a9a"/><rect x="8" y="0" width="2.2" height="2.2" fill="#9a9a9a"/><rect x="8" y="4" width="2.2" height="2.2" fill="#9a9a9a"/><rect x="12" y="0" width="2.2" height="2.2" fill="#9a9a9a"/><rect x="12" y="4" width="2.2" height="2.2" fill="#9a9a9a"/></svg><div class="btn" style="left:782.3px;top:626.2px;width:219.5px;height:23.9px;background:#545454;border-radius:5px"></div><div class="t" style="left:806px;top:626.2px;width:196px;height:23.9px;line-height:23.9px;text-align:center;color:#e6e6e6">Blur...</div><svg class="a" style="left:788px;top:628.2px" width="20" height="20" viewBox="0 0 20 20"><path d="M1 18.6L11 8.6" stroke="#e6e6e6" stroke-width="1.4"/><polygon points="13.40,10.50 12.05,7.26 8.55,6.98 11.21,4.69 10.40,1.27 13.40,3.10 16.40,1.27 15.59,4.69 18.25,6.98 14.75,7.26" fill="none" stroke="#e6e6e6" stroke-width="1.2" stroke-linejoin="round"/></svg><div class="btn" style="left:782.3px;top:657.7px;width:219.5px;height:23.9px;background:#545454;border-radius:5px"></div><div class="t" style="left:806px;top:657.7px;width:196px;height:23.9px;line-height:23.9px;text-align:center;color:#e6e6e6">Sharpen...</div><svg class="a" style="left:788px;top:659.7px" width="20" height="20" viewBox="0 0 20 20"><path d="M1 18.6L11 8.6" stroke="#e6e6e6" stroke-width="1.4"/><polygon points="13.40,10.50 12.05,7.26 8.55,6.98 11.21,4.69 10.40,1.27 13.40,3.10 16.40,1.27 15.59,4.69 18.25,6.98 14.75,7.26" fill="none" stroke="#e6e6e6" stroke-width="1.2" stroke-linejoin="round"/></svg><div class="btn" style="left:782.3px;top:689.2px;width:219.5px;height:23.9px;background:#545454;border-radius:5px"></div><div class="t" style="left:806px;top:689.2px;width:196px;height:23.9px;line-height:23.9px;text-align:center;color:#e6e6e6">Add Noise...</div><svg class="a" style="left:788px;top:691.2px" width="20" height="20" viewBox="0 0 20 20"><path d="M1 18.6L11 8.6" stroke="#e6e6e6" stroke-width="1.4"/><polygon points="13.40,10.50 12.05,7.26 8.55,6.98 11.21,4.69 10.40,1.27 13.40,3.10 16.40,1.27 15.59,4.69 18.25,6.98 14.75,7.26" fill="none" stroke="#e6e6e6" stroke-width="1.2" stroke-linejoin="round"/></svg><div class="btn" style="left:782.3px;top:720.7px;width:219.5px;height:23.9px;background:#545454;border-radius:5px"></div><div class="t" style="left:806px;top:720.7px;width:196px;height:23.9px;line-height:23.9px;text-align:center;color:#e6e6e6">Pixelize...</div><svg class="a" style="left:788px;top:722.7px" width="20" height="20" viewBox="0 0 20 20"><path d="M1 18.6L11 8.6" stroke="#e6e6e6" stroke-width="1.4"/><polygon points="13.40,10.50 12.05,7.26 8.55,6.98 11.21,4.69 10.40,1.27 13.40,3.10 16.40,1.27 15.59,4.69 18.25,6.98 14.75,7.26" fill="none" stroke="#e6e6e6" stroke-width="1.2" stroke-linejoin="round"/></svg><div class="btn" style="left:782.3px;top:752.2px;width:219.5px;height:23.9px;background:#545454;border-radius:5px"></div><div class="t" style="left:806px;top:752.2px;width:196px;height:23.9px;line-height:23.9px;text-align:center;color:#e6e6e6">Make Seamless...</div><svg class="a" style="left:788px;top:754.2px" width="20" height="20" viewBox="0 0 20 20"><path d="M1 18.6L11 8.6" stroke="#e6e6e6" stroke-width="1.4"/><polygon points="13.40,10.50 12.05,7.26 8.55,6.98 11.21,4.69 10.40,1.27 13.40,3.10 16.40,1.27 15.59,4.69 18.25,6.98 14.75,7.26" fill="none" stroke="#e6e6e6" stroke-width="1.2" stroke-linejoin="round"/></svg><div class="btn" style="left:782.3px;top:783.7px;width:219.5px;height:23.9px;background:#545454;border-radius:5px"></div><div class="t" style="left:806px;top:783.7px;width:196px;height:23.9px;line-height:23.9px;text-align:center;color:#e6e6e6">Normal Map...</div><svg class="a" style="left:788px;top:785.7px" width="20" height="20" viewBox="0 0 20 20"><path d="M1 18.6L11 8.6" stroke="#e6e6e6" stroke-width="1.4"/><polygon points="13.40,10.50 12.05,7.26 8.55,6.98 11.21,4.69 10.40,1.27 13.40,3.10 16.40,1.27 15.59,4.69 18.25,6.98 14.75,7.26" fill="none" stroke="#e6e6e6" stroke-width="1.2" stroke-linejoin="round"/></svg><div class="pn" style="top:821.6px;height:60px"></div><div class="t" style="left:799px;top:830.1px;color:#e6e6e6">Text</div><svg class="a" style="left:780.6px;top:834.8000000000001px" width="13" height="9" viewBox="0 0 13 9"><polyline points="1,1.2 6,6.6 11,1.2" fill="none" stroke="#d8d8d8" stroke-width="1.3"/></svg><svg class="a" style="left:990px;top:832.9px" width="15" height="7" viewBox="0 0 15 7"><rect x="0" y="0" width="2.2" height="2.2" fill="#9a9a9a"/><rect x="0" y="4" width="2.2" height="2.2" fill="#9a9a9a"/><rect x="4" y="0" width="2.2" height="2.2" fill="#9a9a9a"/><rect x="4" y="4" width="2.2" height="2.2" fill="#9a9a9a"/><rect x="8" y="0" width="2.2" height="2.2" fill="#9a9a9a"/><rect x="8" y="4" width="2.2" height="2.2" fill="#9a9a9a"/><rect x="12" y="0" width="2.2" height="2.2" fill="#9a9a9a"/><rect x="12" y="4" width="2.2" height="2.2" fill="#9a9a9a"/></svg>
<div class="a" style="left:712.5px;top:48.5px;width:36.5px;height:36.5px;border-radius:50%;background:rgba(20,20,30,0.3)"></div><div class="a" style="left:712.5px;top:88.5px;width:36.5px;height:36.5px;border-radius:50%;background:rgba(20,20,30,0.3)"></div><svg class="a" style="left:712.5px;top:48.5px" width="37" height="37" viewBox="0 0 37 37"><circle cx="20.9" cy="16.9" r="8.3" fill="#e6e6e6"/><path d="M15 23L9.5 28.5" stroke="#e6e6e6" stroke-width="2.4" stroke-linecap="round"/><path d="M20.9 12.6V21.2M16.6 16.9H25.2" stroke="#8c8cb8" stroke-width="1.3"/></svg><svg class="a" style="left:712.5px;top:88.5px" width="37" height="37" viewBox="0 0 37 37">
<g stroke="#e6e6e6" stroke-linecap="round" fill="none">
<path d="M15.2 12.2L16 22M19.6 11.6V22M23.9 13L23.2 22M27.9 17.2L26.3 23.5" stroke-width="3.2"/>
<path d="M10.2 22.6L15 26.5" stroke-width="3.6"/>
</g>
<path d="M13.8 20H27.2Q27.5 26 25 28.5Q22.5 31 19.5 30.6Q16 30.3 13.5 27Z" fill="#e6e6e6"/>
</svg><div class="a" style="left:0;top:55px;width:9px;height:19px;background:rgba(120,120,160,0.55);border-radius:0 4px 4px 0"></div><svg class="a" style="left:1px;top:58px" width="8" height="13" viewBox="0 0 8 13"><polyline points="2,2.5 5.5,6.5 2,10.5" fill="none" stroke="#c8c8e8" stroke-width="1.1"/></svg><div class="a" style="left:1023px;top:42.6px;width:23.6px;height:46.800000000000004px;background:#1f1f1f;border:1px solid #3a3a3a;border-left:none;border-radius:0 5px 5px 0"></div><div class="t" style="left:1043.5px;top:42.6px;width:46.8px;text-align:center;letter-spacing:0.45px;transform-origin:0 0;transform:rotate(90deg);color:#c2c2c2">Tool</div><div class="a" style="left:1023px;top:95.7px;width:23.6px;height:61.60000000000001px;background:#1f1f1f;border:1px solid #3a3a3a;border-left:none;border-radius:0 5px 5px 0"></div><div class="t" style="left:1043.5px;top:95.7px;width:61.6px;text-align:center;letter-spacing:0.45px;transform-origin:0 0;transform:rotate(90deg);color:#c2c2c2">Image</div><div class="a" style="left:1023px;top:163.6px;width:23.6px;height:50.400000000000006px;background:#1f1f1f;border:1px solid #3a3a3a;border-left:none;border-radius:0 5px 5px 0"></div><div class="t" style="left:1043.5px;top:163.6px;width:50.4px;text-align:center;letter-spacing:0.45px;transform-origin:0 0;transform:rotate(90deg);color:#c2c2c2">View</div><div class="a" style="left:1023px;top:221px;width:23.6px;height:66.89999999999998px;background:#1f1f1f;border:1px solid #3a3a3a;border-left:none;border-radius:0 5px 5px 0"></div><div class="t" style="left:1043.5px;top:221px;width:66.9px;text-align:center;letter-spacing:0.45px;transform-origin:0 0;transform:rotate(90deg);color:#c2c2c2">Scopes</div><div class="a" style="left:1023px;top:294.5px;width:23.6px;height:115.19999999999999px;background:#303030;border:1px solid #3d3d3d;border-left:none;border-radius:0 5px 5px 0"></div><div class="t" style="left:1043.5px;top:294.5px;width:115.2px;text-align:center;letter-spacing:0.45px;transform-origin:0 0;transform:rotate(90deg);color:#e6e6e6">Image Editor+</div>
<!-- HEADER LEFT -->
<div class="dbtn" style="left:11px;top:9px;width:38px;height:24px"></div>
<svg class="a" style="left:11px;top:9px" width="38" height="24" viewBox="0 0 38 24">
<path d="M8.5 3.6H5.8V20.2H23.2V9" fill="none" stroke="#8a8a8a" stroke-width="1.3"/>
<path d="M10.8 3.1H23.75V7.4Q23.7 8 23 8H19.7V14.4Q19.7 15.8 18 15.8Q16.2 15.8 16.2 14.4V9.8Q16.2 8 14.6 8Q13.1 8 13.1 9.8V11Q13.1 11.9 12 11.9Q10.8 11.9 10.8 11Z" fill="#e6e6e6"/>
<polyline points="26.8,11.5 30.7,15.3 34.6,11.5" fill="none" stroke="#d6d6d6" stroke-width="1.3"/>
</svg>
<div class="dbtn" style="left:57px;top:9px;width:85px;height:24px"></div>
<svg class="a" style="left:57px;top:9px" width="85" height="24" viewBox="0 0 85 24">
<path d="M6.3 20.6V3.6H23.6V20.6H19.3" fill="none" stroke="#e0e0e0" stroke-width="1.3"/>
<polygon points="5.7,21 17.9,21 11.8,10.4" fill="#e0e0e0"/>
<circle cx="18.2" cy="8.7" r="2" fill="#e0e0e0"/>
<polyline points="73.2,10.8 77,14.6 80.8,10.8" fill="none" stroke="#d6d6d6" stroke-width="1.3"/>
</svg>
<div class="t" style="left:90px;top:12.5px;color:#e0e0e0">View</div>
<div class="t" style="left:159.5px;top:12.5px;color:#e0e0e0">View</div>
<div class="t" style="left:212.5px;top:12.5px;color:#e0e0e0;letter-spacing:0.6px">Image*</div>
<!-- browse image -->
<div class="dbtn" style="left:349px;top:9px;width:60px;height:24px;border-radius:5px 0 0 5px"></div>
<div class="a" style="left:389px;top:9px;width:152px;height:24px;background:#1c1c1c"></div>
<svg class="a" style="left:349px;top:9px" width="40" height="24" viewBox="0 0 40 24">
<path d="M6 20.6V3.6H23.3V20.6H19" fill="none" stroke="#e0e0e0" stroke-width="1.3"/>
<polygon points="5.4,21 17.6,21 11.5,10.4" fill="#e0e0e0"/>
<circle cx="17.9" cy="8.7" r="2" fill="#e0e0e0"/>
<polyline points="27,10.8 30.8,14.6 34.6,10.8" fill="none" stroke="#d6d6d6" stroke-width="1.3"/>
</svg>
<div class="t" style="left:398.5px;top:12.5px;color:#e0e0e0">surface_h.png</div>
<div class="a" style="left:541px;top:9px;width:102px;height:24px;background:#545454;border-radius:0 5px 5px 0"></div>
<div class="a" style="left:566px;top:9px;width:1px;height:24px;background:#3f3f3f"></div>
<div class="a" style="left:591.5px;top:9px;width:1px;height:24px;background:#3f3f3f"></div>
<div class="a" style="left:617px;top:9px;width:1px;height:24px;background:#3f3f3f"></div>
<svg class="a" style="left:541px;top:9px" width="102" height="24" viewBox="0 0 102 24">
<path d="M12.3 3.4Q16.5 5.6 20.6 5.6V12.5Q20.6 17.8 12.3 20.6Q4 17.8 4 12.5V5.6Q8.1 5.6 12.3 3.4Z" fill="none" stroke="#bdbdbd" stroke-width="1.2"/>
<path d="M35 7.2H29.9V20.4H44.6V18" fill="none" stroke="#d0d0d0" stroke-width="1.3"/>
<path d="M33.6 3.6H44.5L47.8 6.9V15.9H33.6Z" fill="none" stroke="#d0d0d0" stroke-width="1.3"/>
<polygon points="44.4,3.6 47.8,7 44.4,7" fill="#d0d0d0"/>
<path d="M61.2 3H70.3V9.4H68.5V4.9H61.2Z" fill="#e6e6e6"/><rect x="57.2" y="6.8" width="9.2" height="5" fill="#e6e6e6"/><rect x="54.6" y="13.2" width="11.8" height="7.6" fill="#e6e6e6"/><polygon points="67.9,15.1 72.8,8.1 72.9,15.4 68.2,20.6" fill="#e6e6e6"/>
<path d="M84 6.6L94.8 17.2M94.8 6.6L84 17.2" stroke="#e0e0e0" stroke-width="1.3"/>
</svg>
<svg class="a" style="left:651px;top:9px" width="24" height="24" viewBox="0 0 24 24">
<path d="M2 20.6L8.5 14.2M6.2 11.3L12.8 17.4L13.6 13.4L18.3 8.3L19.8 8.4L20.6 7.7L14.6 1.8L13.9 2.6L14 4L9.8 8.6Z" fill="none" stroke="#b5b5b5" stroke-width="1.2" stroke-linejoin="round"/>
</svg>
<!-- right header group -->
<div class="dbtn" style="left:880.6px;top:9px;width:49.2px;height:24px"></div>
<div class="a" style="left:880.6px;top:9px;width:24.1px;height:24px;background:#4772b3;border-radius:5px 0 0 5px"></div>
<svg class="a" style="left:880.6px;top:9px" width="50" height="24" viewBox="0 0 50 24">
<path d="M3.2 6.4Q16 8.5 18.3 21" fill="none" stroke="#f0f0f0" stroke-width="1.3"/>
<circle cx="5.1" cy="18.6" r="2.2" fill="none" stroke="#f0f0f0" stroke-width="1.3"/>
<path d="M6.8 16.9L20.8 3.5M14.5 3.5H20.8V9.8" fill="none" stroke="#f0f0f0" stroke-width="1.3"/>
<polyline points="32.4,10.6 36.5,14.6 40.6,10.6" fill="none" stroke="#d6d6d6" stroke-width="1.3"/>
</svg>
<div class="dbtn" style="left:937.4px;top:9px;width:49.5px;height:24px"></div>
<div class="a" style="left:937.4px;top:9px;width:24.1px;height:24px;background:#4772b3;border-radius:5px 0 0 5px"></div>
<svg class="a" style="left:937.4px;top:9px" width="50" height="24" viewBox="0 0 50 24">
<circle cx="15.2" cy="8.8" r="6.3" fill="#f0f0f0"/>
<path d="M5.5 11.5A6.3 6.3 0 1 0 14.6 19.6" fill="none" stroke="#f0f0f0" stroke-width="1.3"/>
<path d="M10.5 9.5L13 12M12.6 8.5L15 11" stroke="#4772b3" stroke-width="1"/>
<polyline points="32.3,10.6 36.4,14.6 40.5,10.6" fill="none" stroke="#d6d6d6" stroke-width="1.3"/>
</svg>
<div class="dbtn" style="left:1000.9px;top:9px;width:38.3px;height:24px"></div>
<svg class="a" style="left:1000.9px;top:9px" width="39" height="24" viewBox="0 0 39 24">
<rect x="5.9" y="3.4" width="17.8" height="17.4" fill="#e6e6e6"/>
<polygon points="7.5,5 22.1,19.2 7.5,19.2" fill="#282828"/>
<polygon points="8.6,19.2 16.6,19.2 12.6,10.6" fill="#666"/>
<circle cx="19.5" cy="8.2" r="2" fill="#282828"/>
<polyline points="26.7,10.6 30.7,14.6 34.7,10.6" fill="none" stroke="#d6d6d6" stroke-width="1.3"/>
</svg>

<!-- RIGHT AREA viewport -->

<div class="a" style="left:1052px;top:4px;width:406px;height:850px;overflow:hidden;border-radius:6px 0 0 0">
<svg width="406" height="850" viewBox="1052 4 406 850" style="display:block">
<defs>
<linearGradient id="vbg" x1="1080" y1="60" x2="1420" y2="760" gradientUnits="userSpaceOnUse">
<stop offset="0" stop-color="#86a6d2"/><stop offset="0.3" stop-color="#6690c8"/><stop offset="0.6" stop-color="#5384c3"/><stop offset="1" stop-color="#4a7fc1"/>
</linearGradient>
<radialGradient id="vhl" cx="0" cy="0" r="1" gradientUnits="userSpaceOnUse" gradientTransform="translate(1052 395) rotate(57) scale(240 125)">
<stop offset="0" stop-color="#e8eaee" stop-opacity="1"/><stop offset="0.2" stop-color="#d8dee8" stop-opacity="0.9"/><stop offset="0.5" stop-color="#b8c6dc" stop-opacity="0.5"/><stop offset="1" stop-color="#9fb6d8" stop-opacity="0"/>
</radialGradient>
<radialGradient id="vhl2" cx="0" cy="0" r="1" gradientUnits="userSpaceOnUse" gradientTransform="translate(1052 250) rotate(70) scale(330 190)">
<stop offset="0" stop-color="#bcc8da" stop-opacity="0.7"/><stop offset="0.5" stop-color="#a8bad6" stop-opacity="0.35"/><stop offset="1" stop-color="#9fb6d8" stop-opacity="0"/>
</radialGradient>
<radialGradient id="vhl3" cx="0" cy="0" r="1" gradientUnits="userSpaceOnUse" gradientTransform="translate(1085 455) rotate(52) scale(170 55)">
<stop offset="0" stop-color="#d0d8e4" stop-opacity="0.55"/><stop offset="0.6" stop-color="#b8c6dc" stop-opacity="0.25"/><stop offset="1" stop-color="#9fb6d8" stop-opacity="0"/>
</radialGradient>
<filter id="soft" x="-5%" y="-5%" width="110%" height="110%"><feGaussianBlur stdDeviation="0.5"/></filter>
</defs>
<rect x="1052" y="4" width="406" height="850" fill="url(#vbg)"/>
<rect x="1052" y="4" width="406" height="850" fill="url(#vhl2)"/>
<rect x="1052" y="4" width="406" height="850" fill="url(#vhl3)"/>
<rect x="1052" y="4" width="406" height="850" fill="url(#vhl)"/>
<path d="M1040 818L1052 828L1072 846L1080 858L1040 858Z" fill="#9fb3cf"/>
<path d="M1040 0H1082L1068 26L1056 42L1040 50Z" fill="#a8aaae"/>
<g filter="url(#soft)"><g stroke="#2e66b0" stroke-width="5" fill="none" stroke-linejoin="round" stroke-opacity="0.7"><path d="M1131.1 -22.2 1127.1 -11.4 1123.3 -0.3 1119.8 10.7 1116.5 21.9 1113.5 33.1 1110.8 44.3 1108.4 55.6 1106.2 66.9 1104.2 78.3 1102.6 89.7 1101.1 101.1 1100.0 112.5 1099.1 123.9 1098.5 135.4 1098.1 146.8 1098.0 158.2 1098.1 169.6 1098.5 181.0 1099.1 192.4 1099.9 203.8 1101.1 215.1 1102.4 226.4 1104.0 237.7 1105.8 248.9 1107.9 260.1 1110.2 271.2 1112.7 282.3 1115.5 293.3 1118.5 304.3 1121.7 315.2 1125.1 326.0 1128.7 336.8 1132.6 347.5 1136.7 358.1 1140.9 368.7 1145.4 379.2 1150.1 389.5 1155.0 399.8 1160.1 410.1 1165.3 420.2 1170.8 430.2 1176.4 440.2 1182.2 450.0 1188.2 459.7 1194.4 469.4 1200.7 478.9 1207.2 488.3 1213.9 497.7 1220.7 506.9 1227.7 516.0 1234.8 525.0 1242.1 533.9 1249.5 542.7 1257.0 551.3 1264.7 559.9 1272.5 568.3 1280.4 576.7 1288.4 584.9 1296.5 593.0 1304.8 600.9 1313.1 608.8 1321.6 616.5 1330.1 624.2 1338.7 631.7 1347.4 639.1 1356.2 646.3 1365.1 653.5 1374.0 660.5 1382.9 667.5 1391.9 674.3 1401.0 681.0 1410.1 687.6 1419.3 694.0 1428.4 700.4 1437.6 706.7 1446.8 712.8 1456.0 718.8 1465.3 724.8 1474.5 730.6"/><path d="M1247.6 -15.3 1244.4 -7.5 1241.5 0.4 1238.8 8.4 1236.3 16.4 1234.0 24.4 1232.0 32.5 1230.3 40.6 1228.7 48.7 1227.4 56.9 1226.2 65.0 1225.3 73.2 1224.6 81.3 1224.1 89.5 1223.8 97.7 1223.7 105.9 1223.7 114.1 1224.0 122.2 1224.4 130.4 1225.0 138.5 1225.8 146.7 1226.7 154.8 1227.8 162.9 1229.1 170.9 1230.5 179.0 1232.1 187.0 1233.8 195.0 1235.7 202.9 1237.7 210.9 1239.9 218.8 1242.2 226.6 1244.6 234.4 1247.2 242.2 1249.8 249.9 1252.6 257.6 1255.6 265.2 1258.6 272.8 1261.8 280.3 1265.1 287.8 1268.4 295.3 1271.9 302.7 1275.5 310.0 1279.2 317.3 1283.0 324.5 1286.9 331.7 1290.9 338.8 1295.0 345.9 1299.1 352.9 1303.4 359.9 1307.7 366.8 1312.1 373.6 1316.6 380.4 1321.2 387.1 1325.9 393.8 1330.6 400.4 1335.4 407.0 1340.3 413.5 1345.2 419.9 1350.2 426.3 1355.3 432.7 1360.4 439.0 1365.6 445.2 1370.9 451.4 1376.2 457.5 1381.6 463.6 1387.0 469.6 1392.5 475.6 1398.0 481.6 1403.6 487.4 1409.2 493.3 1414.9 499.1 1420.6 504.9 1426.4 510.6 1432.2 516.3 1438.1 522.0 1444.0 527.6 1450.0 533.2 1456.0 538.7 1462.0 544.3 1468.1 549.8"/><path d="M1364.3 -6.1 1364.0 -1.8 1363.9 2.6 1363.7 6.9 1363.6 11.2 1363.6 15.6 1363.6 19.9 1363.6 24.2 1363.7 28.5 1363.8 32.8 1363.9 37.1 1364.1 41.4 1364.3 45.7 1364.6 50.0 1364.9 54.2 1365.2 58.5 1365.6 62.8 1366.0 67.0 1366.5 71.3 1367.0 75.5 1367.5 79.7 1368.1 83.9 1368.7 88.1 1369.3 92.3 1370.0 96.5 1370.7 100.7 1371.5 104.9 1372.3 109.0 1373.1 113.2 1374.0 117.3 1374.9 121.5 1375.8 125.6 1376.8 129.7 1377.8 133.8 1378.9 137.9 1380.0 142.0 1381.1 146.1 1382.2 150.2 1383.4 154.2 1384.6 158.3 1385.9 162.3 1387.2 166.4 1388.5 170.4 1389.9 174.4 1391.2 178.4 1392.7 182.4 1394.1 186.3 1395.6 190.3 1397.1 194.3 1398.7 198.2 1400.3 202.1 1401.9 206.1 1403.6 210.0 1405.2 213.9 1407.0 217.7 1408.7 221.6 1410.5 225.5 1412.3 229.3 1414.1 233.2 1416.0 237.0 1417.9 240.8 1419.8 244.6 1421.8 248.4 1423.8 252.2 1425.8 255.9 1427.9 259.7 1430.0 263.4 1432.1 267.1 1434.2 270.8 1436.4 274.5 1438.6 278.2 1440.8 281.9 1443.1 285.5 1445.4 289.2 1447.7 292.8 1450.0 296.4 1452.4 300.0 1454.8 303.6 1457.2 307.1 1459.6 310.7"/><path d="M1029.5 416.3 1032.2 424.0 1035.0 431.7 1037.9 439.4 1040.9 447.1 1043.9 454.7 1047.0 462.3 1050.2 469.8 1053.5 477.3 1056.9 484.8 1060.3 492.3 1063.9 499.7 1067.5 507.0 1071.2 514.3 1075.0 521.6 1078.8 528.8 1082.8 536.0 1086.8 543.2 1090.9 550.2 1095.1 557.3 1099.4 564.3 1103.8 571.2 1108.2 578.1 1112.7 584.9 1117.3 591.7 1122.0 598.4 1126.8 605.1 1131.6 611.7 1136.5 618.3 1141.5 624.8 1146.6 631.2 1151.8 637.6 1157.0 643.9 1162.3 650.1 1167.7 656.3 1173.2 662.4 1178.7 668.5 1184.3 674.4 1190.0 680.3 1195.7 686.2 1201.6 692.0 1207.5 697.7 1213.4 703.3 1219.5 708.9 1225.6 714.4 1231.8 719.8 1238.0 725.1 1244.3 730.4 1250.7 735.6 1257.1 740.7 1263.6 745.7 1270.2 750.7 1276.8 755.6 1283.5 760.4 1290.2 765.1 1297.0 769.8 1303.9 774.3 1310.8 778.8 1317.7 783.2 1324.8 787.5 1331.8 791.8 1338.9 795.9 1346.1 800.0 1353.3 804.0 1360.5 807.9 1367.8 811.7 1375.1 815.4 1382.5 819.0 1389.9 822.6 1397.4 826.0 1404.9 829.4 1412.4 832.7 1419.9 835.9 1427.5 839.0 1435.1 842.0 1442.7 845.0 1450.4 847.8 1458.0 850.5 1465.7 853.2 1473.4 855.8"/><path d="M1031.3 652.2 1033.9 655.3 1036.6 658.4 1039.2 661.5 1041.8 664.6 1044.4 667.7 1047.1 670.8 1049.7 673.8 1052.4 676.9 1055.0 680.0 1057.7 683.0 1060.4 686.1 1063.1 689.1 1065.8 692.1 1068.5 695.2 1071.2 698.2 1073.9 701.2 1076.6 704.2 1079.4 707.2 1082.1 710.2 1084.9 713.1 1087.6 716.1 1090.4 719.1 1093.2 722.0 1096.0 725.0 1098.8 727.9 1101.6 730.8 1104.4 733.8 1107.2 736.7 1110.1 739.6 1112.9 742.4 1115.8 745.3 1118.7 748.2 1121.5 751.0 1124.4 753.9 1127.4 756.7 1130.3 759.5 1133.2 762.3 1136.1 765.1 1139.1 767.9 1142.1 770.7 1145.0 773.4 1148.0 776.2 1151.0 778.9 1154.1 781.6 1157.1 784.3 1160.1 787.0 1163.2 789.7 1166.2 792.4 1169.3 795.0 1172.4 797.7 1175.5 800.3 1178.7 802.9 1181.8 805.5 1184.9 808.1 1188.1 810.6 1191.3 813.2 1194.5 815.7 1197.7 818.2 1200.9 820.7 1204.1 823.2 1207.4 825.6 1210.6 828.1 1213.9 830.5 1217.2 832.9 1220.5 835.3 1223.9 837.7 1227.2 840.0 1230.6 842.4 1233.9 844.7 1237.3 847.0 1240.7 849.2 1244.2 851.5 1247.6 853.7 1251.0 856.0 1254.5 858.2 1258.0 860.3 1261.5 862.5 1265.0 864.6 1268.6 866.8"/><path d="M1033.4 760.0 1034.7 761.5 1036.1 763.0 1037.5 764.5 1038.9 765.9 1040.2 767.4 1041.6 768.8 1043.0 770.3 1044.4 771.8 1045.8 773.2 1047.2 774.7 1048.6 776.1 1050.1 777.5 1051.5 779.0 1052.9 780.4 1054.3 781.8 1055.7 783.2 1057.2 784.7 1058.6 786.1 1060.1 787.5 1061.5 788.9 1062.9 790.3 1064.4 791.7 1065.8 793.1 1067.3 794.4 1068.8 795.8 1070.2 797.2 1071.7 798.6 1073.2 800.0 1074.6 801.3 1076.1 802.7 1077.6 804.0 1079.1 805.4 1080.6 806.7 1082.1 808.1 1083.6 809.4 1085.1 810.8 1086.6 812.1 1088.1 813.4 1089.6 814.8 1091.1 816.1 1092.6 817.4 1094.1 818.7 1095.7 820.0 1097.2 821.3 1098.7 822.6 1100.3 823.9 1101.8 825.2 1103.4 826.5 1104.9 827.8 1106.5 829.1 1108.0 830.3 1109.6 831.6 1111.1 832.9 1112.7 834.1 1114.3 835.4 1115.9 836.7 1117.4 837.9 1119.0 839.2 1120.6 840.4 1122.2 841.6 1123.8 842.9 1125.4 844.1 1127.0 845.3 1128.6 846.6 1130.2 847.8 1131.8 849.0 1133.4 850.2 1135.0 851.4 1136.7 852.6 1138.3 853.8 1139.9 855.0 1141.5 856.2 1143.2 857.4 1144.8 858.6 1146.5 859.7 1148.1 860.9 1149.8 862.1 1151.4 863.2 1153.1 864.4"/><path d="M1029.6 134.2 1035.1 132.5 1040.6 130.8 1046.1 129.1 1051.6 127.4 1057.1 125.8 1062.6 124.1 1068.1 122.5 1073.6 120.9 1079.2 119.3 1084.7 117.7 1090.2 116.1 1095.7 114.5 1101.3 113.0 1106.8 111.4 1112.4 109.9 1117.9 108.3 1123.5 106.8 1129.0 105.3 1134.6 103.8 1140.2 102.3 1145.7 100.9 1151.3 99.4 1156.9 97.9 1162.5 96.5 1168.0 95.0 1173.6 93.6 1179.2 92.2 1184.8 90.8 1190.4 89.4 1196.0 88.0 1201.6 86.6 1207.2 85.2 1212.8 83.9 1218.4 82.5 1224.0 81.1 1229.6 79.8 1235.2 78.5 1240.9 77.1 1246.5 75.8 1252.1 74.5 1257.7 73.2 1263.4 71.9 1269.0 70.6 1274.6 69.3 1280.2 68.0 1285.9 66.7 1291.5 65.5 1297.1 64.2 1302.8 62.9 1308.4 61.7 1314.1 60.4 1319.7 59.2 1325.3 57.9 1331.0 56.7 1336.6 55.5 1342.3 54.2 1347.9 53.0 1353.6 51.8 1359.2 50.6 1364.9 49.4 1370.5 48.2 1376.2 47.0 1381.8 45.8 1387.5 44.6 1393.1 43.4 1398.8 42.2 1404.4 41.0 1410.1 39.8 1415.7 38.6 1421.3 37.4 1427.0 36.3 1432.6 35.1 1438.3 33.9 1443.9 32.7 1449.6 31.6 1455.2 30.4 1460.9 29.2 1466.5 28.0 1472.2 26.9"/><path d="M1030.5 341.4 1036.1 339.1 1041.7 336.8 1047.3 334.4 1052.9 332.0 1058.5 329.6 1064.1 327.2 1069.7 324.8 1075.3 322.3 1080.8 319.9 1086.4 317.4 1091.9 314.9 1097.5 312.4 1103.0 309.8 1108.5 307.3 1114.0 304.7 1119.6 302.2 1125.1 299.6 1130.6 297.0 1136.1 294.4 1141.6 291.9 1147.1 289.3 1152.6 286.7 1158.0 284.1 1163.5 281.5 1169.0 278.9 1174.5 276.3 1180.0 273.7 1185.5 271.1 1190.9 268.5 1196.4 265.9 1201.9 263.3 1207.4 260.7 1212.9 258.2 1218.3 255.6 1223.8 253.1 1229.3 250.5 1234.8 248.0 1240.3 245.5 1245.8 243.0 1251.3 240.5 1256.8 238.0 1262.3 235.6 1267.9 233.1 1273.4 230.7 1278.9 228.3 1284.4 225.9 1290.0 223.6 1295.5 221.2 1301.1 218.9 1306.7 216.6 1312.2 214.4 1317.8 212.1 1323.4 209.9 1329.0 207.8 1334.6 205.6 1340.2 203.5 1345.9 201.4 1351.5 199.4 1357.2 197.3 1362.8 195.4 1368.5 193.4 1374.2 191.5 1379.9 189.6 1385.6 187.8 1391.3 186.0 1397.1 184.2 1402.9 182.5 1408.6 180.8 1414.4 179.2 1420.2 177.6 1426.0 176.1 1431.9 174.6 1437.7 173.1 1443.6 171.7 1449.5 170.4 1455.4 169.1 1461.3 167.8 1467.3 166.6 1473.3 165.5"/><path d="M1036.3 686.6 1041.1 681.4 1046.0 676.2 1050.8 670.9 1055.6 665.7 1060.5 660.6 1065.4 655.4 1070.4 650.2 1075.3 645.1 1080.3 640.0 1085.3 634.9 1090.3 629.8 1095.4 624.8 1100.5 619.7 1105.6 614.7 1110.8 609.7 1115.9 604.8 1121.1 599.9 1126.4 595.0 1131.7 590.1 1137.0 585.3 1142.3 580.5 1147.6 575.7 1153.0 571.0 1158.5 566.3 1163.9 561.7 1169.4 557.0 1174.9 552.4 1180.4 547.9 1186.0 543.3 1191.6 538.8 1197.2 534.4 1202.8 529.9 1208.5 525.5 1214.2 521.1 1219.9 516.8 1225.7 512.5 1231.4 508.2 1237.2 503.9 1243.0 499.7 1248.9 495.5 1254.7 491.3 1260.6 487.1 1266.5 483.0 1272.4 478.8 1278.3 474.7 1284.2 470.6 1290.2 466.5 1296.1 462.4 1302.1 458.4 1308.0 454.3 1314.0 450.3 1320.0 446.2 1326.0 442.1 1331.9 438.1 1337.9 434.0 1343.9 430.0 1349.9 425.9 1355.8 421.8 1361.8 417.7 1367.7 413.5 1373.6 409.4 1379.6 405.2 1385.5 401.0 1391.3 396.7 1397.2 392.4 1403.0 388.1 1408.8 383.7 1414.6 379.3 1420.3 374.8 1426.0 370.2 1431.7 365.6 1437.3 361.0 1442.9 356.2 1448.4 351.4 1453.9 346.5 1459.3 341.5 1464.7 336.5 1470.0 331.3 1475.2 326.1"/><path d="M1215.2 875.0 1218.9 872.1 1222.5 869.3 1226.1 866.4 1229.7 863.5 1233.3 860.6 1236.9 857.7 1240.5 854.8 1244.1 851.9 1247.6 849.0 1251.2 846.0 1254.7 843.1 1258.2 840.1 1261.8 837.1 1265.3 834.1 1268.8 831.1 1272.2 828.1 1275.7 825.1 1279.2 822.1 1282.6 819.0 1286.1 816.0 1289.5 812.9 1292.9 809.8 1296.3 806.7 1299.7 803.6 1303.1 800.5 1306.5 797.4 1309.9 794.3 1313.2 791.1 1316.6 788.0 1319.9 784.8 1323.2 781.6 1326.5 778.4 1329.9 775.2 1333.1 772.0 1336.4 768.8 1339.7 765.6 1343.0 762.3 1346.2 759.1 1349.5 755.8 1352.7 752.6 1355.9 749.3 1359.1 746.0 1362.3 742.7 1365.5 739.3 1368.7 736.0 1371.8 732.7 1375.0 729.3 1378.1 726.0 1381.3 722.6 1384.4 719.2 1387.5 715.8 1390.6 712.4 1393.7 709.0 1396.8 705.5 1399.9 702.1 1402.9 698.7 1406.0 695.2 1409.0 691.7 1412.0 688.2 1415.0 684.7 1418.1 681.2 1421.0 677.7 1424.0 674.2 1427.0 670.7 1430.0 667.1 1432.9 663.5 1435.9 660.0 1438.8 656.4 1441.7 652.8 1444.6 649.2 1447.5 645.6 1450.4 642.0 1453.3 638.3 1456.2 634.7 1459.0 631.0 1461.9 627.3 1464.7 623.7 1467.5 620.0 1470.3 616.3"/></g><g stroke="#c0d0e8" stroke-width="6" fill="none" stroke-linejoin="round" stroke-opacity="0.65"><path d="M1027.3 126.8 1032.8 125.0 1038.3 123.3 1043.8 121.6 1049.3 120.0 1054.9 118.3 1060.4 116.7 1065.9 115.0 1071.4 113.4 1077.0 111.8 1082.5 110.2 1088.1 108.6 1093.6 107.0 1099.2 105.5 1104.7 103.9 1110.3 102.4 1115.9 100.8 1121.4 99.3 1127.0 97.8 1132.6 96.3 1138.1 94.8 1143.7 93.3 1149.3 91.8 1154.9 90.4 1160.5 88.9 1166.1 87.5 1171.7 86.1 1177.3 84.6 1182.9 83.2 1188.5 81.8 1194.1 80.4 1199.7 79.0 1205.3 77.6 1211.0 76.3 1216.6 74.9 1222.2 73.6 1227.8 72.2 1233.4 70.9 1239.1 69.5 1244.7 68.2 1250.3 66.9 1256.0 65.6 1261.6 64.3 1267.2 63.0 1272.9 61.7 1278.5 60.4 1284.2 59.1 1289.8 57.8 1295.4 56.6 1301.1 55.3 1306.7 54.1 1312.4 52.8 1318.0 51.6 1323.7 50.3 1329.3 49.1 1335.0 47.8 1340.6 46.6 1346.3 45.4 1351.9 44.2 1357.6 43.0 1363.2 41.7 1368.9 40.5 1374.5 39.3 1380.2 38.1 1385.8 36.9 1391.5 35.7 1397.1 34.6 1402.8 33.4 1408.5 32.2 1414.1 31.0 1419.8 29.8 1425.4 28.6 1431.1 27.4 1436.7 26.3 1442.4 25.1 1448.0 23.9 1453.6 22.8 1459.3 21.6 1464.9 20.4 1470.6 19.2"/><path d="M1027.5 334.2 1033.1 331.9 1038.7 329.6 1044.3 327.2 1049.9 324.9 1055.4 322.5 1061.0 320.1 1066.6 317.6 1072.1 315.2 1077.6 312.7 1083.2 310.3 1088.7 307.8 1094.2 305.3 1099.7 302.7 1105.3 300.2 1110.8 297.7 1116.3 295.1 1121.8 292.5 1127.3 290.0 1132.8 287.4 1138.2 284.8 1143.7 282.2 1149.2 279.6 1154.7 277.0 1160.2 274.4 1165.7 271.8 1171.1 269.2 1176.6 266.6 1182.1 264.0 1187.6 261.4 1193.1 258.8 1198.6 256.2 1204.1 253.7 1209.6 251.1 1215.1 248.5 1220.6 246.0 1226.1 243.4 1231.6 240.9 1237.1 238.4 1242.6 235.9 1248.1 233.4 1253.6 230.9 1259.2 228.4 1264.7 226.0 1270.3 223.6 1275.8 221.1 1281.4 218.8 1286.9 216.4 1292.5 214.0 1298.1 211.7 1303.7 209.4 1309.3 207.1 1314.9 204.9 1320.6 202.7 1326.2 200.5 1331.8 198.3 1337.5 196.2 1343.2 194.1 1348.9 192.0 1354.6 190.0 1360.3 188.0 1366.0 186.0 1371.7 184.1 1377.5 182.2 1383.3 180.4 1389.0 178.5 1394.8 176.8 1400.7 175.0 1406.5 173.3 1412.3 171.7 1418.2 170.1 1424.1 168.5 1430.0 167.0 1435.9 165.6 1441.8 164.1 1447.8 162.8 1453.8 161.5 1459.8 160.2 1465.8 159.0 1471.8 157.8"/><path d="M1030.6 681.3 1035.4 676.1 1040.2 670.9 1045.1 665.6 1050.0 660.4 1054.9 655.2 1059.8 650.0 1064.7 644.8 1069.7 639.7 1074.7 634.5 1079.7 629.4 1084.8 624.3 1089.9 619.2 1095.0 614.2 1100.2 609.1 1105.4 604.1 1110.6 599.1 1115.8 594.2 1121.1 589.3 1126.4 584.4 1131.7 579.5 1137.1 574.7 1142.5 569.9 1147.9 565.1 1153.4 560.4 1158.8 555.7 1164.4 551.1 1169.9 546.4 1175.5 541.8 1181.1 537.3 1186.7 532.7 1192.4 528.2 1198.0 523.8 1203.7 519.3 1209.5 514.9 1215.2 510.6 1221.0 506.2 1226.8 501.9 1232.6 497.6 1238.5 493.4 1244.3 489.1 1250.2 484.9 1256.1 480.7 1262.0 476.6 1267.9 472.4 1273.8 468.3 1279.8 464.2 1285.7 460.1 1291.7 456.0 1297.7 451.9 1303.6 447.9 1309.6 443.8 1315.6 439.7 1321.6 435.7 1327.6 431.6 1333.5 427.6 1339.5 423.5 1345.5 419.4 1351.4 415.3 1357.3 411.2 1363.3 407.1 1369.2 403.0 1375.0 398.8 1380.9 394.6 1386.7 390.4 1392.5 386.1 1398.3 381.8 1404.1 377.5 1409.8 373.1 1415.5 368.7 1421.1 364.2 1426.7 359.6 1432.3 355.0 1437.8 350.3 1443.2 345.6 1448.6 340.7 1454.0 335.8 1459.3 330.8 1464.5 325.7 1469.6 320.6"/><path d="M1210.4 868.8 1214.0 866.0 1217.7 863.2 1221.3 860.3 1224.8 857.4 1228.4 854.6 1232.0 851.7 1235.6 848.8 1239.1 845.9 1242.7 843.0 1246.2 840.0 1249.7 837.1 1253.2 834.1 1256.7 831.2 1260.2 828.2 1263.7 825.2 1267.1 822.2 1270.6 819.2 1274.0 816.2 1277.5 813.2 1280.9 810.1 1284.3 807.1 1287.7 804.0 1291.1 801.0 1294.5 797.9 1297.8 794.8 1301.2 791.7 1304.5 788.6 1307.9 785.4 1311.2 782.3 1314.5 779.2 1317.8 776.0 1321.1 772.8 1324.4 769.7 1327.7 766.5 1331.0 763.3 1334.2 760.0 1337.5 756.8 1340.7 753.6 1343.9 750.3 1347.1 747.1 1350.3 743.8 1353.5 740.5 1356.7 737.2 1359.9 733.9 1363.0 730.6 1366.2 727.3 1369.3 724.0 1372.4 720.6 1375.5 717.3 1378.7 713.9 1381.7 710.5 1384.8 707.2 1387.9 703.8 1391.0 700.3 1394.0 696.9 1397.1 693.5 1400.1 690.0 1403.1 686.6 1406.1 683.1 1409.1 679.7 1412.1 676.2 1415.1 672.7 1418.1 669.2 1421.0 665.6 1424.0 662.1 1426.9 658.6 1429.8 655.0 1432.8 651.5 1435.7 647.9 1438.6 644.3 1441.4 640.7 1444.3 637.1 1447.2 633.5 1450.0 629.9 1452.9 626.2 1455.7 622.6 1458.5 618.9 1461.3 615.2 1464.1 611.6"/></g><g stroke="#c0d0e8" stroke-width="4" fill="none" stroke-linejoin="round" stroke-opacity="0.45"><path d="M1136.5 -20.3 1132.5 -9.4 1128.7 1.5 1125.2 12.4 1122.0 23.4 1119.1 34.5 1116.4 45.6 1113.9 56.8 1111.8 68.0 1109.9 79.2 1108.2 90.4 1106.8 101.7 1105.7 113.0 1104.8 124.3 1104.2 135.6 1103.8 146.9 1103.7 158.2 1103.8 169.5 1104.2 180.8 1104.8 192.0 1105.6 203.3 1106.7 214.5 1108.1 225.7 1109.6 236.8 1111.5 247.9 1113.5 259.0 1115.8 270.0 1118.3 281.0 1121.0 291.9 1124.0 302.7 1127.1 313.5 1130.5 324.3 1134.1 334.9 1137.9 345.5 1142.0 356.0 1146.2 366.5 1150.6 376.9 1155.3 387.2 1160.1 397.4 1165.1 407.5 1170.4 417.5 1175.8 427.5 1181.3 437.3 1187.1 447.1 1193.1 456.7 1199.2 466.3 1205.5 475.7 1211.9 485.1 1218.5 494.3 1225.3 503.5 1232.2 512.5 1239.2 521.4 1246.5 530.3 1253.8 539.0 1261.3 547.6 1268.9 556.1 1276.6 564.4 1284.5 572.7 1292.5 580.9 1300.5 588.9 1308.7 596.8 1317.0 604.6 1325.4 612.3 1333.9 619.9 1342.5 627.3 1351.1 634.7 1359.8 641.9 1368.6 649.0 1377.5 656.0 1386.4 662.9 1395.4 669.7 1404.4 676.4 1413.4 682.9 1422.5 689.4 1431.7 695.7 1440.8 701.9 1450.0 708.1 1459.1 714.1 1468.3 720.0 1477.5 725.8"/><path d="M1252.9 -13.1 1249.7 -5.4 1246.8 2.4 1244.2 10.2 1241.8 18.0 1239.6 25.9 1237.6 33.8 1235.8 41.7 1234.3 49.7 1233.0 57.7 1231.9 65.7 1231.0 73.7 1230.3 81.8 1229.8 89.8 1229.5 97.9 1229.4 105.9 1229.4 114.0 1229.7 122.0 1230.1 130.0 1230.7 138.1 1231.4 146.1 1232.4 154.1 1233.5 162.0 1234.7 170.0 1236.1 177.9 1237.7 185.9 1239.4 193.7 1241.2 201.6 1243.2 209.4 1245.4 217.2 1247.6 225.0 1250.0 232.7 1252.6 240.3 1255.2 248.0 1258.0 255.6 1260.9 263.1 1263.9 270.6 1267.0 278.1 1270.3 285.5 1273.6 292.9 1277.1 300.2 1280.6 307.5 1284.3 314.7 1288.1 321.8 1291.9 329.0 1295.9 336.0 1299.9 343.0 1304.0 350.0 1308.2 356.9 1312.5 363.7 1316.9 370.5 1321.4 377.2 1325.9 383.9 1330.5 390.5 1335.2 397.1 1340.0 403.6 1344.8 410.0 1349.7 416.4 1354.7 422.8 1359.7 429.1 1364.8 435.3 1370.0 441.5 1375.2 447.7 1380.5 453.8 1385.8 459.8 1391.2 465.8 1396.7 471.7 1402.2 477.7 1407.7 483.5 1413.3 489.3 1419.0 495.1 1424.7 500.8 1430.4 506.5 1436.2 512.2 1442.1 517.8 1448.0 523.4 1453.9 529.0 1459.9 534.5 1465.9 540.1 1471.9 545.6"/><path d="M1370.0 -5.8 1369.7 -1.5 1369.6 2.8 1369.4 7.0 1369.3 11.3 1369.3 15.6 1369.3 19.9 1369.3 24.1 1369.4 28.4 1369.5 32.7 1369.6 36.9 1369.8 41.1 1370.0 45.4 1370.3 49.6 1370.6 53.8 1370.9 58.0 1371.3 62.2 1371.7 66.4 1372.2 70.6 1372.6 74.8 1373.2 79.0 1373.7 83.1 1374.3 87.3 1375.0 91.4 1375.7 95.6 1376.4 99.7 1377.1 103.8 1377.9 107.9 1378.7 112.1 1379.6 116.1 1380.5 120.2 1381.4 124.3 1382.4 128.4 1383.4 132.4 1384.4 136.5 1385.5 140.5 1386.6 144.6 1387.7 148.6 1388.9 152.6 1390.1 156.6 1391.3 160.6 1392.6 164.6 1393.9 168.6 1395.2 172.5 1396.6 176.5 1398.0 180.4 1399.5 184.4 1400.9 188.3 1402.4 192.2 1404.0 196.1 1405.6 200.0 1407.2 203.9 1408.8 207.7 1410.5 211.6 1412.2 215.4 1413.9 219.3 1415.6 223.1 1417.4 226.9 1419.3 230.7 1421.1 234.5 1423.0 238.2 1424.9 242.0 1426.9 245.7 1428.8 249.5 1430.8 253.2 1432.9 256.9 1434.9 260.6 1437.0 264.3 1439.1 268.0 1441.3 271.6 1443.5 275.3 1445.7 278.9 1447.9 282.5 1450.2 286.1 1452.5 289.7 1454.8 293.3 1457.1 296.8 1459.5 300.4 1461.9 303.9 1464.3 307.5"/><path d="M1034.9 414.4 1037.6 422.1 1040.4 429.8 1043.2 437.4 1046.2 445.0 1049.2 452.6 1052.3 460.1 1055.5 467.6 1058.7 475.0 1062.1 482.5 1065.5 489.8 1069.0 497.2 1072.6 504.5 1076.3 511.7 1080.0 519.0 1083.8 526.1 1087.8 533.3 1091.8 540.3 1095.8 547.4 1100.0 554.3 1104.2 561.3 1108.6 568.2 1113.0 575.0 1117.4 581.8 1122.0 588.5 1126.7 595.2 1131.4 601.8 1136.2 608.3 1141.1 614.8 1146.0 621.3 1151.1 627.6 1156.2 633.9 1161.4 640.2 1166.6 646.4 1172.0 652.5 1177.4 658.6 1182.9 664.6 1188.4 670.5 1194.1 676.4 1199.8 682.2 1205.6 687.9 1211.4 693.6 1217.3 699.1 1223.3 704.7 1229.4 710.1 1235.5 715.5 1241.7 720.8 1248.0 726.0 1254.3 731.1 1260.7 736.2 1267.1 741.2 1273.6 746.1 1280.2 751.0 1286.8 755.7 1293.5 760.4 1300.2 765.0 1307.0 769.6 1313.9 774.0 1320.8 778.4 1327.7 782.7 1334.7 786.9 1341.8 791.0 1348.9 795.0 1356.0 799.0 1363.2 802.8 1370.4 806.6 1377.7 810.3 1385.0 813.9 1392.4 817.4 1399.7 820.9 1407.2 824.2 1414.6 827.5 1422.1 830.6 1429.6 833.7 1437.2 836.7 1444.7 839.6 1452.3 842.4 1459.9 845.2 1467.6 847.8 1475.2 850.3"/><path d="M1035.7 648.6 1038.3 651.7 1040.9 654.8 1043.5 657.8 1046.1 660.9 1048.8 664.0 1051.4 667.1 1054.0 670.1 1056.7 673.2 1059.3 676.2 1062.0 679.3 1064.7 682.3 1067.3 685.3 1070.0 688.3 1072.7 691.3 1075.4 694.4 1078.1 697.4 1080.8 700.3 1083.6 703.3 1086.3 706.3 1089.0 709.3 1091.8 712.2 1094.5 715.2 1097.3 718.1 1100.1 721.0 1102.9 724.0 1105.7 726.9 1108.5 729.8 1111.3 732.7 1114.1 735.6 1117.0 738.4 1119.8 741.3 1122.7 744.1 1125.5 747.0 1128.4 749.8 1131.3 752.6 1134.2 755.4 1137.1 758.2 1140.1 761.0 1143.0 763.8 1146.0 766.5 1148.9 769.3 1151.9 772.0 1154.9 774.7 1157.9 777.4 1160.9 780.1 1163.9 782.8 1166.9 785.4 1170.0 788.1 1173.0 790.7 1176.1 793.3 1179.2 795.9 1182.3 798.5 1185.4 801.1 1188.5 803.6 1191.7 806.2 1194.8 808.7 1198.0 811.2 1201.2 813.7 1204.4 816.2 1207.6 818.6 1210.8 821.1 1214.0 823.5 1217.3 825.9 1220.6 828.3 1223.9 830.7 1227.2 833.0 1230.5 835.3 1233.8 837.7 1237.1 840.0 1240.5 842.2 1243.9 844.5 1247.3 846.7 1250.7 849.0 1254.1 851.2 1257.6 853.3 1261.0 855.5 1264.5 857.6 1268.0 859.8 1271.5 861.9"/><path d="M1037.5 756.2 1038.9 757.6 1040.3 759.1 1041.6 760.6 1043.0 762.0 1044.4 763.5 1045.8 764.9 1047.1 766.4 1048.5 767.8 1049.9 769.2 1051.3 770.7 1052.7 772.1 1054.1 773.5 1055.5 774.9 1056.9 776.4 1058.3 777.8 1059.8 779.2 1061.2 780.6 1062.6 782.0 1064.0 783.4 1065.5 784.8 1066.9 786.2 1068.3 787.6 1069.8 788.9 1071.2 790.3 1072.7 791.7 1074.1 793.1 1075.6 794.4 1077.0 795.8 1078.5 797.1 1080.0 798.5 1081.4 799.8 1082.9 801.2 1084.4 802.5 1085.9 803.9 1087.4 805.2 1088.9 806.5 1090.3 807.8 1091.8 809.2 1093.3 810.5 1094.8 811.8 1096.4 813.1 1097.9 814.4 1099.4 815.7 1100.9 817.0 1102.4 818.3 1103.9 819.6 1105.5 820.8 1107.0 822.1 1108.5 823.4 1110.1 824.7 1111.6 825.9 1113.2 827.2 1114.7 828.4 1116.3 829.7 1117.8 831.0 1119.4 832.2 1121.0 833.4 1122.5 834.7 1124.1 835.9 1125.7 837.1 1127.3 838.4 1128.9 839.6 1130.4 840.8 1132.0 842.0 1133.6 843.2 1135.2 844.4 1136.8 845.6 1138.4 846.8 1140.0 848.0 1141.7 849.2 1143.3 850.4 1144.9 851.6 1146.5 852.8 1148.1 853.9 1149.8 855.1 1151.4 856.3 1153.1 857.4 1154.7 858.6 1156.3 859.7"/></g><g stroke="#f2f6fb" stroke-width="1.4" fill="none"><path d="M1137.3 -19.9 1133.3 -9.1 1129.6 1.7 1126.1 12.7 1122.9 23.7 1119.9 34.7 1117.2 45.8 1114.8 57.0 1112.7 68.1 1110.7 79.3 1109.1 90.6 1107.7 101.8 1106.6 113.1 1105.7 124.4 1105.1 135.6 1104.7 146.9 1104.6 158.2 1104.7 169.5 1105.0 180.7 1105.7 192.0 1106.5 203.2 1107.6 214.4 1109.0 225.5 1110.5 236.7 1112.3 247.8 1114.4 258.8 1116.7 269.8 1119.2 280.8 1121.9 291.6 1124.8 302.5 1128.0 313.3 1131.4 324.0 1135.0 334.6 1138.8 345.2 1142.8 355.7 1147.0 366.2 1151.5 376.5 1156.1 386.8 1160.9 397.0 1165.9 407.1 1171.2 417.1 1176.5 427.0 1182.1 436.8 1187.9 446.6 1193.8 456.2 1199.9 465.8 1206.2 475.2 1212.6 484.6 1219.2 493.8 1226.0 502.9 1232.9 512.0 1239.9 520.9 1247.1 529.7 1254.5 538.4 1262.0 547.0 1269.6 555.5 1277.3 563.8 1285.1 572.1 1293.1 580.2 1301.2 588.3 1309.4 596.2 1317.6 604.0 1326.0 611.6 1334.5 619.2 1343.0 626.7 1351.7 634.0 1360.4 641.2 1369.2 648.3 1378.0 655.3 1386.9 662.2 1395.9 669.0 1404.9 675.7 1414.0 682.2 1423.0 688.6 1432.2 695.0 1441.3 701.2 1450.5 707.3 1459.6 713.3 1468.8 719.2 1478.0 725.0" stroke-opacity="0.85"/><path d="M1253.7 -12.8 1250.6 -5.1 1247.7 2.7 1245.0 10.4 1242.6 18.3 1240.4 26.1 1238.5 34.0 1236.7 41.9 1235.2 49.9 1233.9 57.8 1232.8 65.8 1231.9 73.8 1231.2 81.8 1230.7 89.9 1230.4 97.9 1230.3 105.9 1230.3 113.9 1230.6 122.0 1231.0 130.0 1231.6 138.0 1232.3 146.0 1233.3 154.0 1234.4 161.9 1235.6 169.9 1237.0 177.8 1238.6 185.7 1240.3 193.5 1242.1 201.4 1244.1 209.2 1246.2 217.0 1248.5 224.7 1250.9 232.4 1253.4 240.1 1256.1 247.7 1258.8 255.3 1261.7 262.8 1264.7 270.3 1267.9 277.7 1271.1 285.1 1274.4 292.5 1277.9 299.8 1281.4 307.1 1285.1 314.3 1288.8 321.4 1292.7 328.5 1296.6 335.6 1300.7 342.6 1304.8 349.5 1309.0 356.4 1313.3 363.2 1317.7 370.0 1322.1 376.7 1326.7 383.4 1331.3 390.0 1336.0 396.5 1340.7 403.0 1345.5 409.5 1350.4 415.9 1355.4 422.2 1360.4 428.5 1365.5 434.8 1370.7 440.9 1375.9 447.1 1381.2 453.2 1386.5 459.2 1391.9 465.2 1397.3 471.1 1402.8 477.0 1408.4 482.9 1414.0 488.7 1419.6 494.5 1425.3 500.2 1431.1 505.9 1436.8 511.6 1442.7 517.2 1448.6 522.8 1454.5 528.3 1460.5 533.9 1466.5 539.4 1472.5 544.9" stroke-opacity="0.85"/><path d="M1370.9 -5.8 1370.6 -1.5 1370.5 2.8 1370.3 7.1 1370.2 11.3 1370.2 15.6 1370.2 19.9 1370.2 24.1 1370.3 28.4 1370.4 32.6 1370.5 36.9 1370.7 41.1 1370.9 45.3 1371.2 49.5 1371.5 53.7 1371.8 58.0 1372.2 62.1 1372.6 66.3 1373.0 70.5 1373.5 74.7 1374.1 78.8 1374.6 83.0 1375.2 87.2 1375.9 91.3 1376.5 95.4 1377.2 99.6 1378.0 103.7 1378.8 107.8 1379.6 111.9 1380.5 116.0 1381.3 120.0 1382.3 124.1 1383.2 128.2 1384.2 132.2 1385.3 136.3 1386.3 140.3 1387.4 144.3 1388.6 148.4 1389.7 152.4 1390.9 156.4 1392.2 160.3 1393.5 164.3 1394.8 168.3 1396.1 172.2 1397.5 176.2 1398.9 180.1 1400.3 184.0 1401.8 188.0 1403.3 191.9 1404.8 195.8 1406.4 199.6 1408.0 203.5 1409.6 207.4 1411.3 211.2 1413.0 215.1 1414.7 218.9 1416.5 222.7 1418.3 226.5 1420.1 230.3 1421.9 234.1 1423.8 237.8 1425.7 241.6 1427.7 245.3 1429.6 249.1 1431.6 252.8 1433.7 256.5 1435.7 260.2 1437.8 263.8 1439.9 267.5 1442.1 271.2 1444.2 274.8 1446.4 278.4 1448.7 282.0 1450.9 285.6 1453.2 289.2 1455.5 292.8 1457.9 296.3 1460.3 299.9 1462.7 303.4 1465.1 306.9" stroke-opacity="0.85"/><path d="M1035.8 414.1 1038.5 421.8 1041.2 429.5 1044.1 437.1 1047.0 444.7 1050.0 452.2 1053.1 459.7 1056.3 467.2 1059.6 474.7 1062.9 482.1 1066.3 489.5 1069.8 496.8 1073.4 504.1 1077.1 511.3 1080.8 518.5 1084.6 525.7 1088.5 532.8 1092.5 539.9 1096.6 546.9 1100.8 553.9 1105.0 560.8 1109.3 567.7 1113.7 574.5 1118.2 581.3 1122.8 588.0 1127.4 594.6 1132.1 601.2 1136.9 607.8 1141.8 614.3 1146.7 620.7 1151.8 627.1 1156.9 633.4 1162.0 639.6 1167.3 645.8 1172.6 651.9 1178.0 658.0 1183.5 664.0 1189.1 669.9 1194.7 675.7 1200.4 681.5 1206.2 687.3 1212.0 692.9 1217.9 698.5 1223.9 704.0 1230.0 709.4 1236.1 714.8 1242.3 720.1 1248.5 725.3 1254.8 730.4 1261.2 735.5 1267.7 740.5 1274.1 745.4 1280.7 750.3 1287.3 755.0 1294.0 759.7 1300.7 764.3 1307.5 768.8 1314.4 773.3 1321.2 777.6 1328.2 781.9 1335.2 786.1 1342.2 790.2 1349.3 794.2 1356.4 798.2 1363.6 802.0 1370.8 805.8 1378.1 809.5 1385.4 813.1 1392.7 816.6 1400.1 820.0 1407.5 823.4 1415.0 826.6 1422.5 829.8 1430.0 832.9 1437.5 835.9 1445.0 838.8 1452.6 841.6 1460.2 844.3 1467.9 847.0 1475.5 849.5" stroke-opacity="0.85"/><path d="M1036.4 648.0 1039.0 651.1 1041.6 654.2 1044.2 657.3 1046.8 660.3 1049.4 663.4 1052.1 666.5 1054.7 669.5 1057.4 672.6 1060.0 675.6 1062.7 678.7 1065.3 681.7 1068.0 684.7 1070.7 687.7 1073.4 690.7 1076.1 693.8 1078.8 696.8 1081.5 699.7 1084.2 702.7 1086.9 705.7 1089.7 708.7 1092.4 711.6 1095.2 714.6 1098.0 717.5 1100.7 720.4 1103.5 723.3 1106.3 726.3 1109.1 729.2 1111.9 732.0 1114.8 734.9 1117.6 737.8 1120.5 740.7 1123.3 743.5 1126.2 746.3 1129.1 749.2 1131.9 752.0 1134.8 754.8 1137.8 757.6 1140.7 760.3 1143.6 763.1 1146.6 765.9 1149.5 768.6 1152.5 771.3 1155.5 774.0 1158.5 776.7 1161.5 779.4 1164.5 782.1 1167.5 784.7 1170.6 787.4 1173.6 790.0 1176.7 792.6 1179.8 795.2 1182.9 797.8 1186.0 800.4 1189.1 802.9 1192.2 805.5 1195.4 808.0 1198.5 810.5 1201.7 813.0 1204.9 815.5 1208.1 817.9 1211.3 820.3 1214.6 822.8 1217.8 825.2 1221.1 827.6 1224.4 829.9 1227.7 832.3 1231.0 834.6 1234.3 836.9 1237.7 839.2 1241.0 841.5 1244.4 843.7 1247.8 846.0 1251.2 848.2 1254.6 850.4 1258.0 852.6 1261.5 854.7 1265.0 856.9 1268.5 859.0 1272.0 861.1" stroke-opacity="0.85"/><path d="M1038.2 755.5 1039.6 757.0 1040.9 758.5 1042.3 759.9 1043.7 761.4 1045.0 762.8 1046.4 764.3 1047.8 765.7 1049.2 767.2 1050.6 768.6 1052.0 770.0 1053.4 771.5 1054.8 772.9 1056.2 774.3 1057.6 775.7 1059.0 777.1 1060.4 778.5 1061.8 780.0 1063.2 781.4 1064.7 782.7 1066.1 784.1 1067.5 785.5 1069.0 786.9 1070.4 788.3 1071.8 789.7 1073.3 791.0 1074.7 792.4 1076.2 793.8 1077.7 795.1 1079.1 796.5 1080.6 797.8 1082.0 799.2 1083.5 800.5 1085.0 801.8 1086.5 803.2 1088.0 804.5 1089.4 805.8 1090.9 807.2 1092.4 808.5 1093.9 809.8 1095.4 811.1 1096.9 812.4 1098.5 813.7 1100.0 815.0 1101.5 816.3 1103.0 817.6 1104.5 818.9 1106.1 820.2 1107.6 821.4 1109.1 822.7 1110.7 824.0 1112.2 825.2 1113.7 826.5 1115.3 827.8 1116.8 829.0 1118.4 830.3 1120.0 831.5 1121.5 832.7 1123.1 834.0 1124.7 835.2 1126.2 836.4 1127.8 837.7 1129.4 838.9 1131.0 840.1 1132.6 841.3 1134.2 842.5 1135.8 843.7 1137.4 844.9 1139.0 846.1 1140.6 847.3 1142.2 848.5 1143.8 849.7 1145.4 850.8 1147.0 852.0 1148.7 853.2 1150.3 854.4 1151.9 855.5 1153.6 856.7 1155.2 857.8 1156.9 859.0" stroke-opacity="0.85"/><path d="M1026.5 124.3 1032.0 122.6 1037.5 120.9 1043.1 119.2 1048.6 117.5 1054.1 115.8 1059.6 114.2 1065.2 112.5 1070.7 110.9 1076.3 109.3 1081.8 107.7 1087.4 106.1 1092.9 104.5 1098.5 102.9 1104.0 101.4 1109.6 99.8 1115.2 98.3 1120.7 96.8 1126.3 95.3 1131.9 93.8 1137.5 92.3 1143.1 90.8 1148.7 89.3 1154.3 87.9 1159.8 86.4 1165.4 85.0 1171.0 83.5 1176.7 82.1 1182.3 80.7 1187.9 79.3 1193.5 77.9 1199.1 76.5 1204.7 75.1 1210.3 73.8 1216.0 72.4 1221.6 71.0 1227.2 69.7 1232.8 68.3 1238.5 67.0 1244.1 65.7 1249.7 64.4 1255.4 63.0 1261.0 61.7 1266.7 60.4 1272.3 59.1 1277.9 57.9 1283.6 56.6 1289.2 55.3 1294.9 54.0 1300.5 52.8 1306.2 51.5 1311.8 50.3 1317.5 49.0 1323.1 47.8 1328.8 46.5 1334.4 45.3 1340.1 44.1 1345.7 42.9 1351.4 41.6 1357.0 40.4 1362.7 39.2 1368.3 38.0 1374.0 36.8 1379.7 35.6 1385.3 34.4 1391.0 33.2 1396.6 32.0 1402.3 30.8 1407.9 29.6 1413.6 28.4 1419.2 27.3 1424.9 26.1 1430.5 24.9 1436.2 23.7 1441.8 22.6 1447.5 21.4 1453.1 20.2 1458.8 19.0 1464.4 17.9 1470.0 16.7" stroke-opacity="0.45"/><path d="M1026.5 331.8 1032.1 329.5 1037.7 327.2 1043.3 324.8 1048.8 322.5 1054.4 320.1 1060.0 317.7 1065.5 315.3 1071.1 312.8 1076.6 310.4 1082.1 307.9 1087.6 305.4 1093.1 302.9 1098.7 300.4 1104.2 297.8 1109.7 295.3 1115.2 292.7 1120.7 290.2 1126.2 287.6 1131.6 285.0 1137.1 282.4 1142.6 279.9 1148.1 277.3 1153.6 274.7 1159.1 272.1 1164.6 269.5 1170.0 266.9 1175.5 264.3 1181.0 261.7 1186.5 259.1 1192.0 256.5 1197.5 253.9 1203.0 251.3 1208.5 248.7 1214.0 246.2 1219.5 243.6 1225.0 241.1 1230.5 238.5 1236.0 236.0 1241.5 233.5 1247.0 231.0 1252.6 228.5 1258.1 226.0 1263.7 223.6 1269.2 221.2 1274.8 218.8 1280.4 216.4 1285.9 214.0 1291.5 211.6 1297.1 209.3 1302.7 207.0 1308.3 204.7 1314.0 202.5 1319.6 200.3 1325.3 198.1 1330.9 195.9 1336.6 193.8 1342.3 191.7 1348.0 189.6 1353.7 187.5 1359.4 185.5 1365.2 183.6 1370.9 181.6 1376.7 179.7 1382.5 177.9 1388.3 176.1 1394.1 174.3 1399.9 172.5 1405.8 170.8 1411.6 169.2 1417.5 167.6 1423.4 166.0 1429.3 164.5 1435.3 163.0 1441.2 161.6 1447.2 160.2 1453.2 158.9 1459.2 157.7 1465.3 156.4 1471.3 155.3" stroke-opacity="0.45"/><path d="M1028.7 679.6 1033.5 674.3 1038.3 669.1 1043.2 663.9 1048.1 658.6 1053.0 653.4 1057.9 648.2 1062.9 643.0 1067.8 637.9 1072.9 632.7 1077.9 627.6 1083.0 622.5 1088.1 617.4 1093.2 612.3 1098.4 607.3 1103.6 602.2 1108.8 597.3 1114.0 592.3 1119.3 587.4 1124.6 582.5 1130.0 577.6 1135.4 572.8 1140.8 568.0 1146.2 563.2 1151.7 558.4 1157.2 553.7 1162.7 549.1 1168.2 544.4 1173.8 539.8 1179.4 535.2 1185.1 530.7 1190.7 526.2 1196.4 521.7 1202.1 517.3 1207.9 512.9 1213.7 508.5 1219.4 504.1 1225.2 499.8 1231.1 495.5 1236.9 491.3 1242.8 487.0 1248.7 482.8 1254.6 478.6 1260.5 474.4 1266.4 470.3 1272.4 466.2 1278.3 462.0 1284.3 457.9 1290.2 453.9 1296.2 449.8 1302.2 445.7 1308.2 441.7 1314.1 437.6 1320.1 433.5 1326.1 429.5 1332.1 425.4 1338.0 421.4 1344.0 417.3 1349.9 413.2 1355.9 409.1 1361.8 405.0 1367.7 400.9 1373.5 396.7 1379.4 392.5 1385.2 388.3 1391.0 384.0 1396.8 379.8 1402.5 375.4 1408.2 371.0 1413.9 366.6 1419.5 362.1 1425.1 357.6 1430.6 353.0 1436.1 348.3 1441.5 343.6 1446.9 338.8 1452.2 333.9 1457.5 329.0 1462.7 323.9 1467.8 318.7" stroke-opacity="0.45"/><path d="M1208.8 866.8 1212.4 864.0 1216.0 861.1 1219.6 858.3 1223.2 855.4 1226.8 852.5 1230.4 849.7 1233.9 846.8 1237.5 843.9 1241.0 841.0 1244.5 838.0 1248.0 835.1 1251.5 832.2 1255.0 829.2 1258.5 826.2 1262.0 823.3 1265.4 820.3 1268.9 817.3 1272.3 814.3 1275.7 811.2 1279.2 808.2 1282.6 805.2 1286.0 802.1 1289.3 799.0 1292.7 796.0 1296.1 792.9 1299.4 789.8 1302.8 786.7 1306.1 783.5 1309.4 780.4 1312.7 777.3 1316.0 774.1 1319.3 771.0 1322.6 767.8 1325.9 764.6 1329.1 761.4 1332.4 758.2 1335.6 755.0 1338.8 751.8 1342.1 748.5 1345.3 745.3 1348.5 742.0 1351.6 738.7 1354.8 735.4 1358.0 732.1 1361.1 728.8 1364.3 725.5 1367.4 722.2 1370.5 718.9 1373.6 715.5 1376.7 712.2 1379.8 708.8 1382.9 705.4 1386.0 702.0 1389.0 698.6 1392.1 695.2 1395.1 691.8 1398.1 688.3 1401.2 684.9 1404.2 681.4 1407.2 678.0 1410.1 674.5 1413.1 671.0 1416.1 667.5 1419.0 664.0 1422.0 660.5 1424.9 656.9 1427.8 653.4 1430.7 649.8 1433.6 646.3 1436.5 642.7 1439.4 639.1 1442.3 635.5 1445.1 631.9 1448.0 628.3 1450.8 624.6 1453.6 621.0 1456.5 617.3 1459.3 613.7 1462.1 610.0" stroke-opacity="0.45"/></g></g>
<line x1="1052" y1="692" x2="1458" y2="692" stroke="#6a7280" stroke-width="1" stroke-opacity="0.8"/>
<line x1="1399.6" y1="692" x2="1391.6" y2="854" stroke="#7f9a5a" stroke-width="1"/>
</svg>
</div>

<!-- VIEWPORT HEADER -->
<div class="a" style="left:1052px;top:4px;width:406px;height:33px;background:rgba(56,58,62,0.84);border-radius:6px 0 0 0"></div>
<div class="a" style="left:1052px;top:37px;width:406px;height:32.5px;background:rgba(74,78,84,0.8)"></div>
<div class="dbtn" style="left:1060.2px;top:8.1px;width:39.5px;height:24.4px"></div>
<svg class="a" style="left:1060.2px;top:8.1px" width="40" height="25" viewBox="0 0 40 25">
<path d="M13.6 6.8A6.1 6.1 0 1 1 19.4 14.2" fill="none" stroke="#e0e0e0" stroke-width="1.3"/>
<path d="M11.8 10.4A6.1 6.1 0 1 0 17.4 17.2" fill="none" stroke="#e0e0e0" stroke-width="1.3"/>
<circle cx="15.9" cy="12.3" r="2.3" fill="#ececec"/>
</svg>
<svg class="a" style="left:1087.5px;top:17.5px" width="11" height="7" viewBox="0 0 11 7"><polyline points="1,1 5.2,5.4 9.4,1" fill="none" stroke="#d6d6d6" stroke-width="1.3"/></svg>
<div class="a" style="left:1106.9px;top:8.1px;width:64.4px;height:24.4px;background:#282828;border-radius:5px"></div>
<div class="a" style="left:1106.9px;top:8.1px;width:24.4px;height:24.4px;background:#545454;border-radius:5px 0 0 5px"></div>
<svg class="a" style="left:1106.9px;top:8.1px" width="65" height="25" viewBox="0 0 65 25">
<path d="M4.8 15.2L6.3 11.2A6.4 6.4 0 0 1 18.6 11.8L17.8 20.6" stroke="#b8b8b8" stroke-width="5" fill="none"/><path d="M4.8 15.2L6.3 11.2A6.4 6.4 0 0 1 18.6 11.8L17.8 20.6" stroke="#545454" stroke-width="2.6" fill="none"/>
<path d="M28 12.5V22M41 12.5V22M28 17.2H45.2M32.3 14.5V20M36.6 14.5V20M45.2 12.5V22" stroke="#e0e0e0" stroke-width="1.2" fill="none"/>
<rect x="39.3" y="2.5" width="5" height="5" fill="#e6e6e6"/>
</svg>
<svg class="a" style="left:1159.2px;top:17.5px" width="11" height="7" viewBox="0 0 11 7"><polyline points="1,1 5.2,5.4 9.4,1" fill="none" stroke="#d6d6d6" stroke-width="1.3"/></svg>
<div class="a" style="left:1178.5px;top:8.1px;width:64.2px;height:24.4px;background:rgba(60,64,72,0.55);border-radius:5px"></div>
<div class="a" style="left:1178.5px;top:8.1px;width:24.4px;height:24.4px;background:rgba(85,85,85,0.8);border-radius:5px 0 0 5px"></div>
<svg class="a" style="left:1178.5px;top:8.1px" width="65" height="25" viewBox="0 0 65 25">
<circle cx="12.2" cy="12.2" r="8.8" fill="none" stroke="#8a8a8a" stroke-width="1.1"/>
<circle cx="12.2" cy="12.2" r="3" fill="#b8b8b8"/>
<path d="M30.3 20.5Q34 20 36 11Q37.5 3.6 40.1 3.6Q42.7 3.6 44.2 11Q46.2 20 49.9 20.5" fill="none" stroke="#9a9a9a" stroke-width="1.2"/>
</svg>
<svg class="a" style="left:1231px;top:17.5px" width="11" height="7" viewBox="0 0 11 7"><polyline points="1,1 5.2,5.4 9.4,1" fill="none" stroke="#6a6e76" stroke-width="1.3"/></svg>
<div class="dbtn" style="left:1264.2px;top:8.1px;width:39.5px;height:24.4px"></div>
<svg class="a" style="left:1264.2px;top:8.1px" width="40" height="25" viewBox="0 0 40 25">
<path d="M7.5 6.8Q14.5 -0.8 21.7 6.8Q14.5 14.4 7.5 6.8Z" fill="#e6e6e6"/>
<circle cx="14.6" cy="6.8" r="2.8" fill="#282828"/><circle cx="14.6" cy="6.8" r="1.3" fill="#e6e6e6"/>
<path d="M3 11.5L15.5 16.3L10.2 18L7.8 23.3Z" fill="#e6e6e6"/>
</svg>
<svg class="a" style="left:1290.6px;top:17.5px" width="11" height="7" viewBox="0 0 11 7"><polyline points="1,1 5.2,5.4 9.4,1" fill="none" stroke="#d6d6d6" stroke-width="1.3"/></svg>
<div class="dbtn" style="left:1311.1px;top:8.1px;width:49.5px;height:24.4px"></div>
<div class="a" style="left:1311.1px;top:8.1px;width:24px;height:24.4px;background:#4772b3;border-radius:5px 0 0 5px"></div>
<svg class="a" style="left:1311.1px;top:8.1px" width="25" height="25" viewBox="0 0 25 25">
<path d="M3.2 6.4Q16 8.5 18.3 21" fill="none" stroke="#f0f0f0" stroke-width="1.3"/>
<circle cx="5.1" cy="18.6" r="2.2" fill="none" stroke="#f0f0f0" stroke-width="1.3"/>
<path d="M6.8 16.9L20.8 3.5M14.5 3.5H20.8V9.8" fill="none" stroke="#f0f0f0" stroke-width="1.3"/>
</svg>
<svg class="a" style="left:1342.6px;top:17.5px" width="11" height="7" viewBox="0 0 11 7"><polyline points="1,1 5.2,5.4 9.4,1" fill="none" stroke="#d6d6d6" stroke-width="1.3"/></svg>
<div class="dbtn" style="left:1368px;top:8.1px;width:49.8px;height:24.4px"></div>
<div class="a" style="left:1368px;top:8.1px;width:24.2px;height:24.4px;background:#4772b3;border-radius:5px 0 0 5px"></div>
<svg class="a" style="left:1368px;top:8.1px" width="25" height="25" viewBox="0 0 25 25">
<circle cx="15.2" cy="8.8" r="6.3" fill="#f0f0f0"/>
<path d="M5.5 11.5A6.3 6.3 0 1 0 14.6 19.6" fill="none" stroke="#f0f0f0" stroke-width="1.3"/>
<path d="M10.5 9.5L13 12M12.6 8.5L15 11" stroke="#4772b3" stroke-width="1"/>
</svg>
<svg class="a" style="left:1399.5px;top:17.5px" width="11" height="7" viewBox="0 0 11 7"><polyline points="1,1 5.2,5.4 9.4,1" fill="none" stroke="#d6d6d6" stroke-width="1.3"/></svg>
<div class="a" style="left:1424.7px;top:8.1px;width:24.7px;height:24.4px;background:rgba(80,84,92,0.6);border-radius:5px"></div>
<svg class="a" style="left:1424.7px;top:8.1px" width="25" height="25" viewBox="0 0 25 25">
<path d="M8.2 6.5V3.5H19.2V15.5H17" fill="none" stroke="#6d7178" stroke-width="1.1"/>
<rect x="3.5" y="7.5" width="13" height="13" fill="none" stroke="#6d7178" stroke-width="1.1"/>
</svg>
<div class="a" style="left:1455.5px;top:8.1px;width:10px;height:24.4px;background:rgba(80,84,92,0.6);border-radius:5px"></div>
<!-- row 2 -->
<svg class="a" style="left:1068px;top:40.5px" width="30" height="25" viewBox="0 0 30 25">
<path d="M6 8.5A10.5 10.5 0 0 1 23 6M24.5 16A10.5 10.5 0 0 1 7.3 19.5" fill="none" stroke="#e0e0e0" stroke-width="1.2"/>
<polygon points="1.2,12.3 7.8,12.3 4.5,17.2" fill="#e6e6e6"/>
<polygon points="22.8,12.3 29.2,12.3 26,7.6" fill="#e6e6e6"/>
<polygon points="14.9,8.2 19.3,12.5 14.9,16.8 10.5,12.5" fill="#b5b5b5"/>
</svg>
<div class="t" style="left:1106.9px;top:45.6px;color:#d8d8d8">Orientation:</div>
<div class="dbtn" style="left:1192.2px;top:40.9px;width:126.2px;height:24.4px"></div>
<svg class="a" style="left:1192.2px;top:40.9px" width="30" height="25" viewBox="0 0 30 25">
<path d="M11.5 12.5V3.5M9 6L11.5 3.5L14 6M11.5 12.5H24.5M22 10L24.5 12.5L22 15M11.5 12.5L5 19M5 15.5V19H8.5" fill="none" stroke="#d8d8d8" stroke-width="1.1"/>
<circle cx="11.5" cy="12.5" r="2.6" fill="#f0f0f0"/>
</svg>
<div class="t" style="left:1225.9px;top:45.6px;color:#e6e6e6">Default</div>
<svg class="a" style="left:1305.4px;top:50px" width="11" height="7" viewBox="0 0 11 7"><polyline points="1,1 5.2,5.4 9.4,1" fill="none" stroke="#d6d6d6" stroke-width="1.3"/></svg>
<div class="t" style="left:1337.3px;top:45.6px;color:#d8d8d8">Drag:</div>
<div class="dbtn" style="left:1384.9px;top:40.9px;width:90px;height:24.4px"></div>
<div class="t" style="left:1395.4px;top:45.6px;color:#e6e6e6">Select Box</div>
<!-- overlay text -->
<div class="t" style="left:1063.8px;top:83.5px;color:#f4f4f4;-webkit-text-stroke:0.35px #f4f4f4;text-shadow:0 0 2px #223, 1px 1px 1px rgba(0,0,0,0.5)">Camera Perspective</div>
<div class="t" style="left:1064px;top:106.5px;color:#f4f4f4;-webkit-text-stroke:0.35px #f4f4f4;text-shadow:0 0 2px #223, 1px 1px 1px rgba(0,0,0,0.5)">(1) Collection | Sphere</div>
<div class="a" style="left:1052px;top:88.9px;width:8px;height:16.6px;background:rgba(120,130,150,0.5);border-radius:0 3px 3px 0"></div>
<svg class="a" style="left:1052px;top:88.9px" width="8" height="17" viewBox="0 0 8 17"><polyline points="2.5,5 5.5,8.3 2.5,11.6" fill="none" stroke="#a0b0c8" stroke-width="1"/></svg>

<!-- 3d cursor -->
<svg class="a" style="left:1384.5px;top:402px" width="54" height="54" viewBox="0 0 54 54">
<path d="M27 3V17M27 37V51M3 27H17M37 27H51" stroke="#1a1a1a" stroke-width="1.5"/>
<circle cx="27" cy="27" r="12" fill="none" stroke="#f0f0f0" stroke-width="1.4"/>
<circle cx="27" cy="27" r="12" fill="none" stroke="#d02020" stroke-width="1.4" stroke-dasharray="4.7 4.7"/>
<circle cx="27" cy="27" r="2" fill="#ff8c1a"/>
</svg>


</body></html>
